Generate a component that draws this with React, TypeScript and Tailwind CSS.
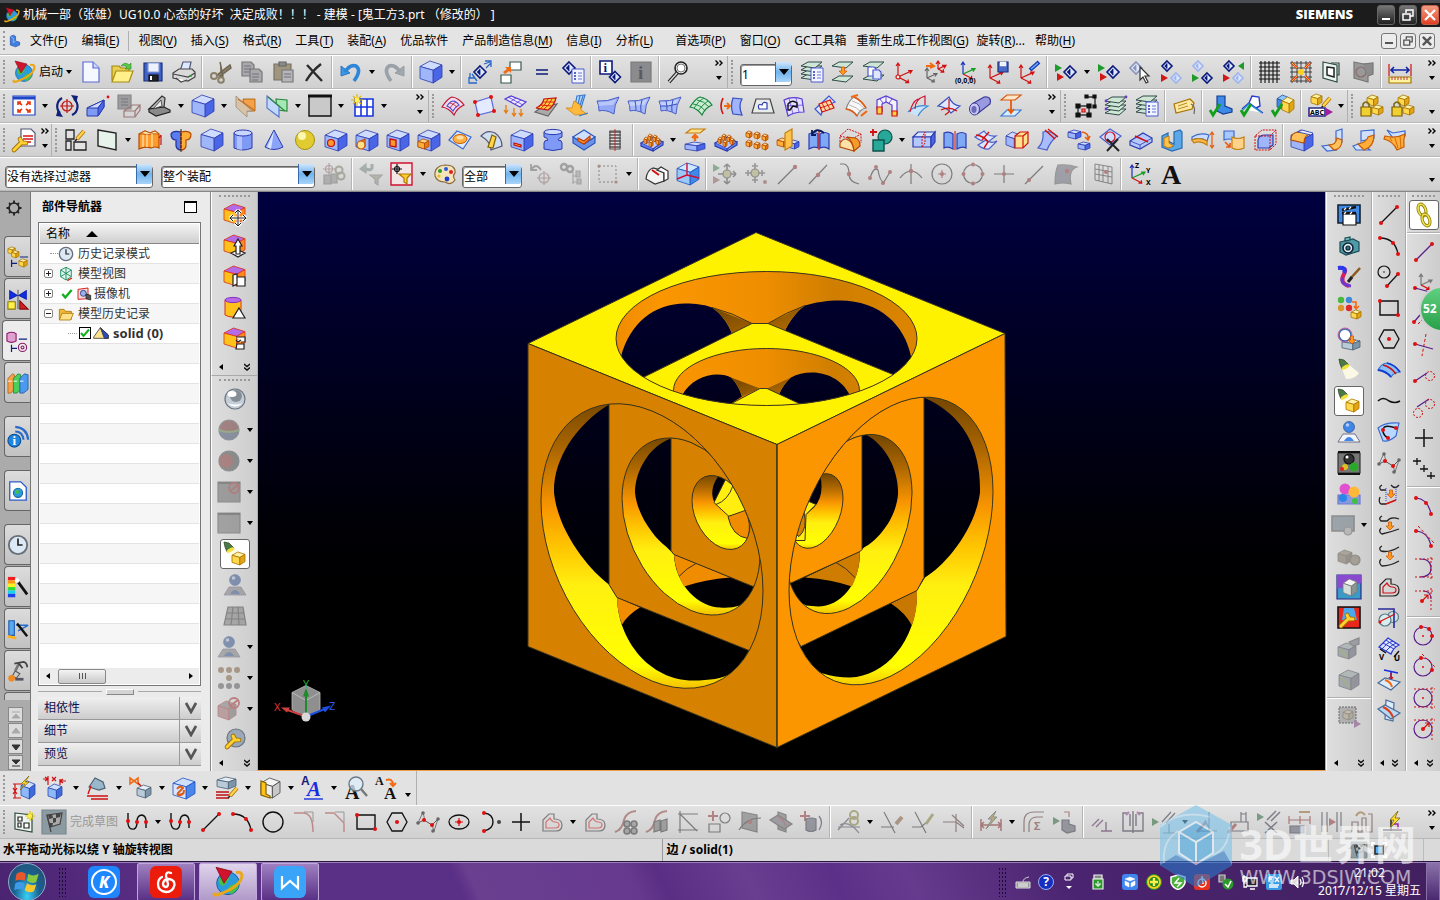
import type { ReactNode } from "react";

type Palette = [string, string, string, string];

const BLUE: Palette = ["#cfdcff", "#9fb6fa", "#4a66e6", "#2a3bb0"];
const GOLD: Palette = ["#fff3a8", "#ffd84e", "#e2a516", "#a87400"];
const ORANGE: Palette = ["#ffd592", "#ffae3c", "#e57a12", "#b34b00"];
const STEEL: Palette = ["#e6eef5", "#b9cad8", "#7d95a8", "#4c6172"];
const PURPLE: Palette = ["#b46be8", "#ffc21a", "#ff8a1c", "#d8301a"];

const p = (d: string, s = "#222", f = "none", w = 1.2) => <path d={d} stroke={s} fill={f} strokeWidth={w} />;
const dot = (x: number, y: number, r = 2, f = "#e01010") => <circle cx={x} cy={y} r={r} fill={f} />;
const ring = (x: number, y: number, r: number, s = "#222", f = "none", w = 1.2) => (
  <circle cx={x} cy={y} r={r} stroke={s} fill={f} strokeWidth={w} />
);

const box = (x: number, y: number, w: number, h: number, c: Palette = BLUE) => (
  <g stroke={c[3]} strokeWidth={0.8} strokeLinejoin="round">
    <path fill={c[0]} d={`M${x} ${y + 0.25 * h}L${x + 0.45 * w} ${y}L${x + w} ${y + 0.18 * h}L${x + 0.6 * w} ${y + 0.42 * h}Z`} />
    <path fill={c[1]} d={`M${x} ${y + 0.25 * h}L${x + 0.6 * w} ${y + 0.42 * h}V${y + h}L${x} ${y + 0.8 * h}Z`} />
    <path fill={c[2]} d={`M${x + 0.6 * w} ${y + 0.42 * h}L${x + w} ${y + 0.18 * h}V${y + 0.74 * h}L${x + 0.6 * w} ${y + h}Z`} />
  </g>
);

const diamond = (x: number, y: number, s: number, c = "#0b1a7a") => (
  <g>
    <path d={`M${x} ${y - s}L${x + s} ${y}L${x} ${y + s}L${x - s} ${y}Z`} fill="#dfe8ff" stroke={c} strokeWidth={1.6} />
    <path d={`M${x} ${y - s * 0.55}L${x - s * 0.55} ${y}L${x} ${y + s * 0.55}Z`} fill={c} />
    <path d={`M${x} ${y - s * 0.55}V${y + s * 0.55}`} stroke={c} strokeWidth={0.8} />
  </g>
);

const sheet = (y: number, f = "#cfe6d4", s = "#2f4a4a") => p(`M1 ${y + 4}L8 ${y}H22L15 ${y + 6}Z`, s, f, 1);

const tri = (x: number, y: number, f: string) => <path d={`M${x} ${y - 4}L${x + 7} ${y}L${x} ${y + 4}Z`} fill={f} />;

const axes = (x: number, y: number, s: number, up = "#d01010", side = "#d01010", low = "#d01010") => (
  <g>
    {p(`M${x} ${y}V${y - s}M${x - 2} ${y - s + 3}L${x} ${y - s}L${x + 2} ${y - s + 3}`, up)}
    {p(`M${x} ${y}L${x + s} ${y - s * 0.45}M${x + s - 4} ${y - s * 0.45}H${x + s}L${x + s - 2} ${y - s * 0.45 + 3}`, side)}
    {p(`M${x} ${y}L${x + s * 0.8} ${y + s * 0.4}M${x + s * 0.8 - 1} ${y + s * 0.4 - 3}V${y + s * 0.4}H${x + s * 0.8 - 4}`, low)}
  </g>
);

const listPage = (x: number, y: number) => (
  <g>
    {p(`M${x} ${y}H${x + 12}V${y + 14}H${x}Z`, "#4a5ad0", "#f2f5ff", 1)}
    {p(`M${x + 2} ${y + 4}H${x + 4}M${x + 2} ${y + 7}H${x + 4}M${x + 2} ${y + 10}H${x + 4}`, "#2a3bb0", "none", 1.5)}
    {p(`M${x + 6} ${y + 4}H${x + 10}M${x + 6} ${y + 7}H${x + 10}M${x + 6} ${y + 10}H${x + 10}`, "#6676dd", "none", 1)}
  </g>
);

const patch = (f: string, s: string, grid?: string) => (
  <g>
    {p("M1 13Q7 4 11 3Q18 4 23 11Q16 14 13 21Q8 14 1 13Z", s, f, 1.2)}
    {grid && p("M4 10Q12 11 16 17M8 6Q15 7 20 13M5 14Q10 6 15 4M9 17Q14 10 19 7", grid, "none", 0.9)}
  </g>
);

const slab = (f: string, s: string) => (
  <g>
    {p("M1 7Q11 8 23 3Q18 11 18 20Q9 15 3 17Q3 11 1 7Z", s, f, 1)}
    <path d="M2 8Q11 9 21 5Q18 9 17 11Q10 11 3 12Z" fill="#fff" opacity={0.35} />
  </g>
);

const loopFig = (s: string, t: string) => (
  <g>
    {p("M3 21V10L9 4H14V9Q22 9 22 15Q22 21 16 21Z", s)}
    {p("M6 18V12L10 8Q12 12 15 12Q19 12 19 15Q19 18 15 18Z", t)}
  </g>
);

const arrowDown = (x: number, y: number) => (
  <path d={`M${x - 1.5} ${y}H${x + 1.5}V${y + 4}H${x + 4}L${x} ${y + 8}L${x - 4} ${y + 4}H${x - 1.5}Z`} fill="#ff9a1c" stroke="#c8500a" strokeWidth={0.7} />
);

const tick = (x: number, y: number) => p(`M${x} ${y}L${x + 3} ${y + 5}L${x + 10} ${y - 6}`, "#12a01c", "none", 2.8);

const pencil = (x: number, y: number) => (
  <g>
    {p(`M${x} ${y}L${x + 7} ${y - 8}`, "#b07000", "none", 4)}
    {p(`M${x} ${y}L${x + 7} ${y - 8}`, "#ffd54a", "none", 2.4)}
    {p(`M${x - 2} ${y + 2}L${x} ${y}`, "#222", "none", 1.6)}
  </g>
);

const wrench = (x: number, y: number) => (
  <g strokeLinecap="round">
    {p(`M${x} ${y + 11}L${x + 8} ${y + 3}M${x + 6} ${y}L${x + 8} ${y + 4}L${x + 12} ${y + 4}`, "#9a6a00", "none", 4.6)}
    {p(`M${x} ${y + 11}L${x + 8} ${y + 3}M${x + 6} ${y}L${x + 8} ${y + 4}L${x + 12} ${y + 4}`, "#ffd030", "none", 3)}
  </g>
);

const glyph = (t: string, x: number, y: number, size: number, f = "#111", family = "Liberation Serif") => (
  <text x={x} y={y} fontSize={size} fontFamily={family} fontWeight={700} fill={f}>{t}</text>
);

const globe = (
  <g>
    <circle cx={12} cy={13} r={8.5} fill="#2b9be0" stroke="#0b4f90" strokeWidth={0.6} />
    <path d="M5 10Q9 6 13 9Q12 13 8 15Q5 14 5 10ZM13 15Q18 12 20 15Q18 20 14 21Q11 18 13 15Z" fill="#48c048" />
    <path d="M2 20Q0 23 6 21Q22 15 22.500 7Q22 4 18 5" fill="none" stroke="#e8a818" strokeWidth={2.2} />
    <path d="M3 1L15 4L9 13Z" fill="#d0142c" stroke="#8c0b1a" strokeWidth={0.6} />
  </g>
);

const lamp = (x: number, y: number) => (
  <g>
    <path d={`M${x + 9} ${y + 5}L${x + 20} ${y + 14}Q${x + 16} ${y + 20} ${x + 7} ${y + 20}L${x + 3} ${y + 10}Z`} fill="#fffde8" opacity={0.9} />
    <path d={`M${x} ${y}L${x + 5} ${y + 1}L${x + 10} ${y + 6}L${x + 3} ${y + 10}L${x + 1} ${y + 5}Z`} fill="#4d7a44" stroke="#22401f" strokeWidth={0.7} />
    <ellipse cx={x + 6.5} cy={y + 8} rx={4.4} ry={1.8} fill="#f4e23c" transform={`rotate(-30 ${x + 6.5} ${y + 8})`} />
  </g>
);

const person = (f: string, base: string) => (
  <g>
    <path d="M6 14H18L23 22H1Z" fill={base} stroke="#557" strokeWidth={0.8} />
    <path d="M7 21Q12 13 17 21Z" fill={f} />
    <circle cx={12} cy={7} r={5.500} fill={f} stroke="#1c3f80" strokeWidth={0.6} />
    <circle cx={10.500} cy={5} r={1.8} fill="#fff" opacity={0.6} />
  </g>
);

const ballBox = (inner: ReactNode) => (
  <g>
    {box(1, 2, 22, 21)}
    {inner}
  </g>
);

const chainLink = (x: number, y: number) => (
  <g fill="none" transform={`rotate(-20 ${x} ${y})`}>
    <ellipse cx={x} cy={y} rx={3.600} ry={6} stroke="#8f8210" strokeWidth={3.200} />
    <ellipse cx={x} cy={y} rx={3.600} ry={6} stroke="#f0e04a" strokeWidth={1.600} />
  </g>
);

const icons: Record<string, ReactNode> = {
  nx: globe,
  part: <>{p("M4 4L9 2L13 4V12L20 14V19L13 22L4 19Z", "#1c44a0", "#3f7fe0", 1)}{p("M4 4L9 7V15L13 12", "#a8ccff")}</>,
  new: <>{p("M4 2H14L20 8V22H4Z", "#5a6ad8", "#f6f8ff")}{p("M14 2V8H20", "#5a6ad8", "#cdd6ff")}</>,
  open: <>{p("M2 6H9L11 8H19V20H2Z", "#a88a10", "#e8cf50")}{p("M6 11H23L19 22H2Z", "#a88a10", "#fff08a")}{p("M11 6Q15 1 19 5L21 3V9H15L17 7Q15 5 11 6Z", "#2a8a20", "#5cc848", 0.6)}</>,
  save: <>{p("M3 3H21V21H3Z", "#1c2f78", "#3f62c8")}{p("M7 3H18V12H7Z", "#8a9ad0", "#eef2ff")}{p("M8 15H17V21H8Z", "#111", "#222")}{p("M10 16V20", "#fff", "none", 2)}</>,
  print: <>{p("M8 11L11 2H19L17 11Z", "#557", "#dceaff")}{p("M1 13L7 9H20L23 12V17L16 21L1 18Z", "#444", "#dadada")}{p("M1 14L16 17L23 13", "#444")}{p("M4 18L9 22L15 20", "#444", "#fff")}{dot(19, 16, 1, "#20b030")}</>,
  cut: <>{p("M8 15L21 5L22 8L10 17M11 2L14 16L11 17", "#6d6452", "#8a806a", 1.4)}{ring(5, 16, 3, "#8a806a", "none", 2)}{ring(12, 20, 2.8, "#8a806a", "none", 2)}</>,
  copy: <>{p("M2 2H11L14 5V16H2Z", "#777", "#a9a9ad")}{p("M10 9H19L22 12V22H10Z", "#777", "#a9a9ad")}{p("M4 6H11M4 9H11M4 12H9M12 14H19M12 17H19M12 20H18", "#70707a", "none", 1)}</>,
  paste: <>{p("M3 4H20V20H3Z", "#7a7260", "#a09680")}{p("M8 2H15V6H8Z", "#666", "#8a8a8a")}{p("M11 10H22V22H11Z", "#777", "#b5b5ba")}{p("M13 14H20M13 17H20", "#70707a", "none", 1)}</>,
  del: <>{p("M5 5L20 21M19 4Q10 11 4 21", "#2b2b2b", "none", 2.4)}</>,
  undo: <>{p("M2 6V16L11 13Z", "#1a66b8", "#3a98e8", 0.8)}{p("M6 12Q11 4 17 6Q23 10 15 21", "#2f86d8", "none", 3.6)}</>,
  redo: <>{p("M22 6V16L13 13Z", "#8d949a", "#a2a9b0", 0.8)}{p("M18 12Q13 4 7 6Q1 10 9 21", "#9aa1a8", "none", 3.6)}</>,
  cube: box(1, 1, 22, 22),
  diaUpdate: <>{diamond(12, 12, 6)}{p("M16 4L22 2M18 8L23 3M17 1H23V7M2 13V18H7M4 14L9 21M1 17V23H9", "#2a66c8", "none", 1.3)}</>,
  boxLink: <>{p("M11 2H22V10H11Z", "#3a5a4a", "#fff")}{p("M2 15H12V23H2Z", "#3a5a4a", "#fff")}<path d="M4 12L8 9L6 7H12V13L10 11L6 14Z" fill="#f26a12" /></>,
  equals: p("M6 10H18M6 14H18", "#0b1a7a", "none", 1.6),
  diaList: <>{diamond(8, 8, 6)}{listPage(11, 9)}</>,
  infoDia: <>{p("M2 1H14V14H2Z", "#0b1a7a", "#fff", 1.6)}{glyph("i", 5.500, 12, 13, "#0b1a7a")}{diamond(17, 17, 5.500)}</>,
  infoGray: <>{p("M2 2H22V22H2Z", "#7a7a7a", "#8b8b8f")}{glyph("i", 9, 19, 19, "#5a5a5e")}</>,
  search: <>{ring(15, 8, 6, "#222", "#f4f4f4", 1.6)}{ring(15, 8, 4, "#555", "#fff", 0.8)}{p("M11 13L3 22", "#222", "none", 3.6)}{p("M11 13L3 22", "#ddd", "none", 1.4)}</>,
  layerList: <>{sheet(14)}{sheet(10)}{sheet(6)}{sheet(2)}{listPage(11, 8)}</>,
  layerMove: <>{sheet(16)}{sheet(2)}{arrowDown(12, 7)}</>,
  layerCopy: <>{sheet(15)}{sheet(2)}{p("M6 7H12L14 9V16H6Z", "#4a5ad0", "#fff")}{p("M11 10H17L19 12V19H11Z", "#4a5ad0", "#dfe6ff")}</>,
  csysRed: <>{axes(5, 17, 14)}{ring(5, 17, 2, "#d01010", "#eee")}</>,
  csysMove: <>{axes(3, 18, 10, "#666", "#666", "#666")}{axes(14, 9, 8)}{p("M2 6H8M6 3L10 6L6 8", "#f26a12", "none", 2)}</>,
  csysZero: <>{axes(8, 14, 12, "#1a30c0", "#18a020", "#d01010")}<text x={0} y={23} fontSize={7} fontWeight={700}>(0,0,0)</text></>,
  csysSave: <>{axes(4, 18, 13)}{p("M12 2H22V12H12Z", "#1c2f78", "#4a6ac8")}{p("M14 2H20V6H14Z", "#fff", "#eef2ff", 0.5)}</>,
  csysPen: <>{axes(4, 18, 13)}{p("M13 10L22 2", "#1a3fb8", "none", 4)}{p("M14 9L21 3", "#6fb0ff", "none", 1.4)}</>,
  playA: <>{tri(1, 8, "#1f9a2c")}{tri(3, 17, "#d01818")}{diamond(16, 12, 6)}</>,
  diaPick: <>{diamond(8, 8, 6, "#8a94b8")}{p("M12 7V20L15 17L18 23L20 22L17 16H21Z", "#333", "#fff")}</>,
  diaRed: <>{diamond(8, 6, 5)}{tri(2, 18, "#d01818")}{diamond(17, 18, 5, "#9fb4ee")}</>,
  diaGreen: <>{diamond(8, 6, 5, "#9fb4ee")}{tri(2, 18, "#1f9a2c")}{diamond(17, 18, 5)}</>,
  diaBoth: <>{diamond(8, 6, 5)}<path d="M23 2V10L17 6Z" fill="#1f9a2c" />{tri(2, 18, "#d01818")}{diamond(17, 18, 5, "#9fb4ee")}</>,
  grid: p("M3 1V23M7 1V23M11 1V23M15 1V23M19 1V23M1 3H22M1 7H22M1 11H22M1 15H22M1 19H22", "#111", "none", 1.1),
  gridSnap: <>{p("M3 1V23M8 1V23M12 1V23M17 1V23M21 1V23M1 3H23M1 8H23M1 12H23M1 17H23M1 21H23", "#333", "none", 0.9)}{dot(12, 12, 3, "#ffd21c")}{p("M3 3L8 8M21 3L16 8M3 21L8 16M21 21L16 16", "#e8380c", "none", 2.4)}{p("M3 3L8 8M21 3L16 8M3 21L8 16M21 21L16 16", "#ffae20", "none", 1)}</>,
  planeBox: <>{p("M3 2L17 5V22L3 18Z", "#2f4a3f", "#e9f5ee")}{p("M7 7L14 8V17L7 15Z", "#222", "#fff", 1.5)}{p("M11 3H19V15H17", "#2f4a3f")}</>,
  planeGray: <>{p("M3 2L17 5V22L3 18Z", "#777", "#999")}{ring(10, 12, 5, "#8a6a6a")}{p("M12 4L22 3V14L17 16", "#777", "#8c8c8c")}</>,
  measure: <>{p("M1 4V16M23 4V16", "#d01010")}{p("M3 10H21M6 7L3 10L6 13M18 7L21 10L18 13", "#1026a8", "none", 1.6)}{p("M1 17H23V23H1Z", "#a87400", "#fff3a0")}{p("M4 17V20M7 17V20M10 17V20M13 17V20M16 17V20M19 17V20", "#a01040", "none", 0.8)}</>,

  fit: <>{p("M1 2H23V21H1Z", "#1f46c8", "#fff")}{p("M1 4H23", "#1f46c8", "none", 3)}{p("M6 8L10 11M18 8L14 11M6 18L10 15M18 18L14 15M6 11V8H9M15 8H18V11M6 15V18H9M15 18H18V15", "#e8380c", "none", 1.6)}</>,
  rotate: <>{p("M7 4A9.5 9.5 0 0 0 5 19M17 21A9.5 9.5 0 0 0 19 5", "#10207a", "none", 2.2)}<path d="M16 1L23 2L21 9ZM8 23L1 22L3 15Z" fill="#10207a" />{ring(12, 12, 5, "#c01010")}{p("M12 5V19M5 12H19", "#c01010")}</>,
  perspective: <>{p("M1 14L18 6V13L12 22L1 22Z", "#2a3bb0", "#7f9af2", 1)}{p("M1 14L18 6L12 14Z", "#2a3bb0", "#cfdcff", 1)}{p("M12 14L18 6V13L12 22Z", "#2a3bb0", "#4a66e6", 1)}{dot(22, 3, 1.4)}</>,
  drawGray: <>{p("M1 1H14V15H1Z", "#888", "#9c9ca0")}{p("M4 5H11M4 8H11M4 11H11", "#777")}{p("M7 17H18V23H7ZM7 17L15 11H23L18 17M23 11V16L18 23", "#a07878")}</>,
  section: <>{p("M1 15L14 2L17 4L16 13Z", "#333", "#b9b9b9")}{p("M1 15L16 13L22 16V18L8 22L1 18Z", "#222", "#8a8a8a")}{p("M5 15L13 6L14 12Z", "#333", "#eee", 0.8)}</>,
  clipOrange: <>{p("M9 5H21V17L11 17Z", "#a85a00", "#f5a04a", 0.8)}{p("M2 2L18 17H13V23L2 13Z", "#9a8c7a", "#d9c3a8", 0.8)}{p("M4 5L20 16", "#c07020")}</>,
  clipGreen: <>{p("M11 5L22 6V17L12 16Z", "#2a8a3c", "#a5e8b4")}{p("M2 2L14 12V23L2 14Z", "#5a7ad0", "#c3d8ff")}{p("M3 3L20 17", "#2a8a3c")}</>,
  frame: <>{p("M1 2H23V22H1Z", "#111", "#c9c9c9", 1.4)}{p("M0 2H24", "#111", "none", 3)}</>,
  gridStar: <>{p("M4 5H22V22H4ZM10 5V22M16 5V22M4 13H22", "#1a36e0", "#fff", 1.6)}{p("M6 0V12M0 6H12M2 2L10 10M10 2L2 10", "#e0b800", "none", 1.2)}{dot(6, 6, 2.4, "#fff04a")}</>,
  surfRed: <>{patch("#f0dcec", "#c01030")}{p("M6 12Q9 7 13 7Q16 8 18 11Q14 13 12 17Q9 13 6 12Z", "#4a4ad8")}{p("M9 14Q12 9 15 8M9 9Q13 10 16 13", "#c01030", "none", 0.8)}</>,
  planeDots: <>{p("M3 8L19 3L22 17L6 21Z", "#5a6ad8", "#e4eaff")}{dot(3, 8)}{dot(19, 3)}{dot(22, 17)}{dot(6, 21)}</>,
  netDots: <>{p("M2 5L8 2L23 8L17 13Z", "#5a3ad8", "#eef")}{p("M5 3L20 11M7 8L13 4M12 10L18 6", "#5a3ad8", "none", 0.8)}{p("M3 11V19M1 16L3 19L5 16M11 14V22M9 19L11 22L13 19M18 15V22M16 19L18 22L20 19", "#e87a10", "none", 1.3)}</>,
  netRed: <>{p("M1 18L8 13L23 10L14 22Z", "#666", "#aaa")}{p("M2 14Q8 12 10 5L22 4Q20 12 14 16Z", "#c01010", "#ffd040")}{p("M6 15Q11 12 14 5M10 15Q15 12 18 5M6 11L18 12M9 8L20 8", "#e02010", "none", 1)}</>,
  pour: <>{p("M12 2L20 1L16 14L10 12Z", "#3a7ad0", "#b9dcff")}{p("M1 14H7L9 7L15 10L16 16L22 20L10 21Z", "#d08810", "#ffb93c", 0.8)}{p("M14 22L23 19M15 2L13 10M18 2L15 11", "#3a7ad0", "none", 1.2)}</>,
  slab: slab("#93a9f5", "#4a5fc8"),
  slabLines: <>{slab("#a5b8f8", "#4a5fc8")}{p("M8 7Q9 11 9 16M15 6Q13 12 14 18", "#3a4fc0", "none", 1)}</>,
  slabGrid: <>{slab("#a5b8f8", "#4a5fc8")}{p("M8 7Q9 11 9 16M15 6Q13 12 14 18M2 12Q10 13 19 10", "#3a4fc0", "none", 1)}</>,
  netGreen: patch("#c8ecd2", "#16823a", "#16823a"),
  bracketIn: <>{p("M3 4Q-1 12 3 20", "#d01010", "none", 1.6)}{p("M4 12H9M7 9L10 12L7 15", "#f26a12", "none", 1.8)}{p("M13 4L22 5Q18 12 22 21L13 20Q10 12 13 4Z", "#3a4fc0", "#9fb4fa")}</>,
  trap: <>{p("M5 5H19L23 19H1Z", "#444", "#e8ece8")}{p("M8 15Q6 9 11 11Q12 7 16 9V15Z", "#2a3bb0", "#fff")}</>,
  loopGrid: <>{p("M2 6Q10 2 20 5L22 18Q12 18 6 22Z", "#5a3ad8", "#e4e0ff")}{p("M7 4L11 20M14 4L17 18M3 12L21 11", "#5a3ad8", "none", 0.7)}{p("M6 16V10Q10 5 15 9V13L11 12L8 16Z", "#111", "none", 1.4)}</>,
  gridPatch: <>{p("M2 15L8 21Q10 12 22 8L16 2Q10 8 2 15Z", "#3a5ad8", "#dfe8ff")}{p("M6 10L17 6L21 14L9 18Z", "#d01010", "#ffd9a0")}{p("M9 9L13 17M13 8L17 15M7 14L19 10", "#d01010", "none", 0.9)}</>,
  gridOrange: <>{p("M2 15Q5 6 10 3Q17 6 22 14Q16 15 13 22Q9 16 2 15Z", "#888", "#f7f7f7")}{p("M2 15Q9 16 13 22M10 3Q17 6 22 14", "#e05a10", "none", 1.6)}{p("M5 11Q13 13 17 18M8 7Q16 9 20 14", "#aaa", "none", 0.8)}{p("M7 3L14 1M17 22L23 17", "#f26a12", "none", 2.2)}</>,
  gridU: <>{p("M2 15V6L11 2L22 7V20L17 18V11L11 8L7 10V17Z", "#5a3ad8", "#f2f2f8")}{p("M5 5L8 9M11 2V8M17 5L14 9", "#5a3ad8", "none", 0.9)}{p("M2 13H7V20H2Z", "#d01010", "#ffd040")}{p("M17 17H22V22H17Z", "#d01010", "#ffd040")}</>,
  trimRed: <>{p("M2 18Q10 10 22 12Q15 16 12 22", "#3a8ad0", "#c9e4ff")}{p("M9 15Q9 5 19 2V11M4 18Q6 8 12 5", "#d01030")}</>,
  trimBlue: <>{p("M1 12L12 3Q15 11 23 12L14 19Q9 13 1 12Z", "#3a4fc0", "#dfe8ff")}{p("M4 16Q12 12 20 17M12 5V18M12 18L8 21", "#d01010")}</>,
  tube: <>{p("M4 10L16 3Q24 2 22 10L9 20", "#3a3a9a", "#9a9ae0")}<ellipse cx={6.500} cy={15} rx={5} ry={6} fill="#c8c8f4" stroke="#3a3a9a" /><ellipse cx={6} cy={15.500} rx={2.6} ry={3.4} fill="#6a6ab8" /></>,
  project: <>{p("M2 6L8 1H22L16 6Z", "#d05a10", "#ffe4c8")}{p("M2 22L8 16H22L16 22Z", "#3a7ad0", "#d8ebff")}{p("M12 6V18M9 15L12 19L15 15", "#e8590c", "none", 1.8)}</>,
  nodes: <>{p("M5 12H16V21H5ZM13 3H22V12", "#333", "none", 1.4)}{p("M3 10H7V14H3ZM14 10H18V14H14ZM3 19H7V23H3ZM14 19H18V23H14ZM12 1H15V4H12ZM20 1H23V4H20ZM20 11H23V14H20Z", "#111", "#111")}{p("M9 15H12V18H9Z", "#d01010", "#ff8080")}</>,
  layers: <>{sheet(15)}{sheet(11)}{sheet(7)}{sheet(3)}{dot(2, 7, 1.4, "#6a3ac0")}{dot(22, 3, 1.4, "#6a3ac0")}{dot(2, 15, 1.4, "#6a3ac0")}</>,
  tag: <>{p("M2 10L18 5L22 9L20 15L4 19Z", "#a87400", "#ffe9a0")}{p("M6 12L15 9M6 15L16 12", "#a87400", "none", 0.8)}{p("M19 10Q24 12 22 20", "#666")}</>,
  checkPart: <>{p("M8 2H16V12L23 15V18L14 20L8 17Z", "#123f90", "#3f8ae8")}{tick(1, 16)}</>,
  checkPen: <>{p("M2 15L9 9L23 19M9 9L12 2L19 3L20 12L16 14", "#2a3bd0", "#fff", 1.4)}{p("M3 16L9 10L22 19", "#2a9ad0", "none", 1.4)}{tick(1, 16)}</>,
  checkBox: <>{box(6, 1, 12, 15, ["#8ac8ff", "#3f8ae8", "#2a66c8", "#1c4f9a"])}{box(11, 3, 12, 16, GOLD)}{tick(1, 16)}</>,
  abc: <>{box(3, 0, 11, 11, GOLD)}{pencil(15, 12)}{p("M1 14H17V22H1Z", "#2a2a8a", "#fff", 1.6)}<text x={2} y={21} fontSize={7} fontWeight={700}>ABC</text>{tri(18, 18, "#a020a0")}</>,
  lockA: <>{box(7, 1, 11, 11, GOLD)}{box(12, 11, 11, 10, GOLD)}{p("M3 13V10Q6 6 9 10V13", "#7a6a10", "none", 1.6)}{p("M1 13H11V22H1Z", "#7a5a00", "#f0d030")}</>,

  doc: <>{p("M9 1H19L23 5V18H9Z", "#557", "#fff")}{p("M11 8H21M11 11H21M11 14H19", "#e05050", "none", 1.8)}{wrench(2, 11)}</>,
  sketch: <>{p("M2 2H10V11H2ZM2 13H7V22H2ZM10 14H22V22H10Z", "#222", "#e2e2e2", 1.3)}{pencil(13, 11)}</>,
  plane: p("M3 2L21 5V22L3 18Z", "#222", "#e5f3ea", 1.4),
  extrude: <>{p("M1 6L7 3L12 5L17 3L21 6V20Q17 18 13 20Q7 18 1 21Z", "#b34b00", "#ff9a2c")}{p("M1 6Q6 5 9 7Q14 5 21 6L17 3L12 5L7 3Z", "#b34b00", "#ffe0a8", 0.8)}{p("M5 7V19M9 7V19M14 6V19", "#ffd592", "none", 1.600)}{p("M23 17V7M21 10L23 7", "#d01010")}</>,
  revolve: <>{p("M12 4Q4 2 2 6Q2 12 7 12V18Q8 22 12 22Z", "#22309a", "#5a7cf0")}{p("M12 4Q20 2 22 6Q22 12 17 12V18Q16 22 12 22Z", "#b34b00", "#ffae3c")}<path d="M12 1V24" stroke="#222" strokeDasharray="3 1" /></>,
  cylinder: <>{p("M3 5V20Q12 24 21 20V5", "#2a3bb0", "#7f9af5", 1)}<path d="M6 6V21L11 22V7Z" fill="#c5d2ff" opacity={0.7} /><ellipse cx={12} cy={5} rx={9} ry={3} fill="#c9d6ff" stroke="#2a3bb0" /></>,
  cone: <>{p("M12 2L21 19Q12 24 3 19Z", "#2a3bb0", "#8ba3f8", 1)}<path d="M12 3L5 19L9 21Z" fill="#dbe3ff" /></>,
  sphere: <>{ring(12, 12, 9.500, "#a89010", "#e0cc30", 1)}<circle cx={9} cy={8} r={4} fill="#fbf6b0" /></>,
  hole: ballBox(ring(7, 15, 3.500, "#c01010", "#ff9a2c")),
  boss: ballBox(<>{p("M4 14L10 11V18L8 20Z", "#c05000", "#ff9a2c")}{ring(6, 17, 4, "#c05000", "#ffe08a")}</>),
  pocket: ballBox(p("M4 11L10 12V19L4 18Z", "#c01010", "#ff9a2c", 1.4)),
  pad: ballBox(box(1, 11, 11, 10, ORANGE)),
  emboss: <>{p("M1 12L9 3L23 9L15 21Z", "#3a6ad0", "#dceaff")}<ellipse cx={12} cy={11} rx={7} ry={4.500} fill="#ffb040" stroke="#c85a00" /><ellipse cx={12} cy={9.500} rx={3.500} ry={2} fill="#ffe0a8" /></>,
  fan: <>{p("M2 8Q8 1 16 5Q23 10 23 18L12 22Q12 14 2 8Z", "#557", "#cfdff0")}{p("M9 19L13 7L17 9L14 20Z", "#806000", "#ffd54a")}</>,
  slot: ballBox(p("M4 15L11 17V19L4 17Z", "#c01010", "#ff9a2c")),
  groove: <>{p("M3 4V9Q7 10 7 12Q3 12 3 15V21Q12 24 21 21V15Q21 12 17 12Q17 10 21 9V4", "#2a3bb0", "#7f9af5", 1)}<ellipse cx={12} cy={4} rx={9} ry={2.6} fill="#cfdcff" stroke="#2a3bb0" /></>,
  dart: <>{p("M1 9L12 2L23 9L12 16Z", "#2a5ac0", "#cfe0ff")}{p("M1 9V15L12 22L23 15V9L12 16Z", "#2a5ac0", "#6a90e8")}{p("M6 10L12 13L18 8V11L12 16L6 13Z", "#c04000", "#ff8a2c")}</>,
  thread: <>{p("M7 3H17V21H7Z", "#555", "#ddd")}{p("M6 4H18M6 7H18M6 10H18M6 13H18M6 16H18M6 19H18", "#555", "none", 1.4)}{p("M12 1V23", "#d01010", "none", 0.8)}</>,
  pattern: <>{p("M1 15L11 9L23 14L13 21Z", "#2a3bb0", "#b9c9fb")}{p("M1 15V18L13 23V21M13 23L23 17V14", "#2a3bb0", "#5a7cf0")}{box(4, 9, 4, 7, ORANGE)}{box(8, 6, 4, 7, ORANGE)}{box(9, 12, 4, 7, ORANGE)}{box(13, 7, 4, 7, ORANGE)}{box(16, 10, 4, 7, ORANGE)}</>,
  patternFace: <>{p("M3 5L8 1H22L17 5Z", "#c08010", "#ffe08a")}{p("M12 13V8M9 10L12 7L15 10", "#f26a12", "none", 2.4)}{box(2, 14, 20, 9)}</>,
  patternMany: <>{box(1, 3, 6, 7, ORANGE)}{box(9, 4, 6, 7, ORANGE)}{box(17, 6, 6, 7, ORANGE)}{box(1, 12, 6, 7, ORANGE)}{box(9, 14, 6, 7, ORANGE)}{box(17, 15, 6, 7, ORANGE)}</>,
  mirror: <>{box(1, 10, 11, 9, ORANGE)}{box(12, 12, 11, 9)}{p("M9 5L16 1V18L9 22Z", "#c08010", "#ffc24a")}</>,
  mirrorBlue: <>{p("M2 6Q7 3 11 6V20Q7 18 2 21ZM13 6Q18 3 22 6V21Q18 18 13 20Z", "#2a3bb0", "#7fa8f5")}{p("M12 3V22", "#d01010")}{p("M5 6Q10 -1 17 5M5 2V7H9", "#0b1a5a", "none", 1.8)}</>,
  bodyDash: <>{<path d="M2 14V8L10 1L23 6V15M2 8L14 11V15M14 11L23 6" fill="none" stroke="#d01010" strokeDasharray="2 1" />}{p("M2 19V15Q6 9 10 12Q15 14 16 23Z", "#b34b00", "#ffe0a8")}{p("M16 23L22 18Q22 11 17 10L9 9Q15 13 16 23Z", "#b34b00", "#f59a2c")}</>,
  combine: <>{ring(16, 9, 7, "#0f4f4a", "#28a898")}{p("M4 12H15V23H4Z", "#0f4f4a", "#28a898", 1.4)}{p("M4 1V8M1 4H8", "#d01010", "none", 1.8)}</>,
  split: <>{p("M1 9L6 4H23L19 9Z", "#2a3bb0", "#dbe3ff")}{p("M1 9H19V19H1Z", "#2a3bb0", "#b5c8fc")}{p("M19 9L23 4V14L19 19Z", "#2a3bb0", "#4a66e6")}{<path d="M10 19V9L13 4M10 19L13 15V4" fill="none" stroke="#d01010" strokeDasharray="2 1" />}</>,
  trimBody: <>{p("M1 5Q6 3 10 6V21Q5 18 1 20ZM14 6Q19 3 23 6V20Q19 18 14 21Z", "#2a3bb0", "#7fa8f5")}{p("M12 3V22", "#d01010", "none", 1)}</>,
  sheetRed: <>{p("M1 9L10 3Q14 9 22 8L14 14Q8 14 1 9Z", "#4a5fc8", "#dfe6ff")}{p("M4 17L12 12Q16 16 23 13L15 21Q10 22 4 17Z", "#4a5fc8", "#dfe6ff")}{p("M2 7Q10 8 14 14L10 20M15 4L8 12", "#d01010", "none", 1.4)}</>,
  boxDash: <>{box(1, 4, 14, 16, ["#cfdcff", "#9fb6fa", "#ffae3c", "#2a3bb0"])}{p("M10 8L15 4H23V15L18 20H10Z", "#d01010", "#ffe28a")}{p("M10 8H18V20M18 8L23 4", "#d01010")}</>,
  skin: <>{p("M7 4Q14 2 21 8Q14 14 11 22L2 20Q8 14 7 4Z", "#4a5fc8", "#a8bdfa")}{p("M9 2L19 11M12 1L22 9", "#d01010", "none", 1.4)}</>,
  boxMove: <>{box(1, 2, 13, 9)}{box(11, 14, 12, 8)}{p("M15 4Q22 5 21 11M18 9L21 12L23 8", "#e8590c", "none", 1.6)}</>,
  delFace: <>{p("M2 9L12 1L23 8L12 17Z", "#4a5fc8", "#cfdcff")}{ring(12, 9, 5, "#d01010")}{p("M9 11L21 23M20 11L9 23", "#222", "none", 2)}</>,
  slabCut: <>{p("M1 13L14 5L23 10V14L11 21L1 17Z", "#2a3bb0", "#b5c8fc")}{p("M1 13L11 17L23 10M11 17V21", "#2a3bb0", "none", 0.8)}{p("M6 8L19 14", "#d01010", "none", 1.600)}</>,
  bend: <>{p("M2 8L8 5V13L14 16V4L20 2L22 4V20L12 23L2 19Z", "#2a6ab0", "#5aa8e8")}{p("M4 10L9 8V15L14 18L8 20L4 18Z", "#b36a00", "#ffc24a", 0.8)}</>,
  thick: <>{p("M1 9Q9 4 18 7L16 13Q9 9 1 12Z", "#3a6ad0", "#c8dcff")}{p("M1 12Q9 9 16 13V17Q9 12 3 15Z", "#c08010", "#ffb84a")}{p("M21 4V20M19 7L21 4L23 7M19 17L21 20L23 17", "#e8590c")}</>,
  wrapFace: <>{p("M2 3H12V12Q7 10 2 12Z", "#3a6ad0", "#a8c8ff")}{p("M10 9Q16 12 22 9V20Q16 23 10 20Z", "#c08010", "#ffd28a")}{p("M3 14L8 19M8 15V19H4", "#e8590c", "none", 1.6)}</>,
  offset: <>{p("M5 20V12Q6 7 12 7H20V17L16 20Z", "#2a3bb0", "#9fb6fa")}{<path d="M2 22V8L9 2H23V16L17 22Z M2 8H17V22M17 8L23 2" fill="none" stroke="#d01010" strokeDasharray="2 1" />}</>,
  edgeBlend: <>{box(1, 2, 22, 21)}{p("M1 11Q1 5 8 4L22 6Q14 6 14 15L1 12Z", "#b34b00", "#ffc25a")}{p("M8 4L12 2L23 5L21 7Z", "#2a3bb0", "#e8eeff", 0.8)}</>,
  faceBlend: <>{p("M15 3L21 1V14L15 16ZM1 18L10 17L15 22L6 23Z", "#3a6ad0", "#cfe0ff")}{p("M8 17Q15 17 16 10L21 12Q21 21 13 22Z", "#c85a00", "#ffc25a")}</>,
  softBlend: <>{p("M9 3L22 2V10L9 13ZM1 18L9 15L18 22L4 22Z", "#3a6ad0", "#cfe0ff")}{p("M6 16Q15 14 16 9L22 7Q22 19 12 22Z", "#c85a00", "#ffae3c")}</>,
  bridge: <>{p("M4 2L10 5L22 3V8L10 10Z", "#3a6ad0", "#cfe0ff")}{p("M2 8Q12 11 22 6Q20 12 21 19L14 22Q10 13 1 11Z", "#c85a00", "#ffae3c")}{p("M7 10L9 13M12 10L15 20M17 8L18 20", "#c85a00", "none", 0.8)}</>,

  selLink: <>{p("M2 13H9V22H2ZM9 12H15V21H9Z", "#666", "#888")}{ring(7, 7, 3.500, "#8a6a6a")}{p("M7 1V13M1 7H13", "#8a6a6a")}{ring(17, 8, 3.500, "#777560", "none", 2)}{ring(19, 14, 3.500, "#777560", "none", 2)}</>,
  backFilter: <>{p("M13 2V6Q12 9 7 7", "#6f7f7f", "none", 3)}{p("M7 2L1 7L7 11Z", "#6f7f7f", "#6f7f7f")}{p("M11 13H23L19 17V23L16 21V17Z", "#777", "#93907a")}</>,
  filter: <>{p("M1 1H22V23H1Z", "#d01030", "#f3e6e6", 1.4)}{p("M7 2V12M2 7H12", "#111")}{ring(7, 7, 2.500, "#111")}{p("M9 12H21L17 16V22L14 20V16Z", "#b07800", "#ffd030")}</>,
  palette: <>{p("M2 14Q1 4 12 3Q23 3 22 11Q19 14 22 18Q18 24 12 20Q4 20 2 14Z", "#8a6a3a", "#f5e2b8")}{dot(7, 9, 2, "#2a9a2a")}{dot(13, 7, 2, "#2a5ae0")}{dot(18, 10, 2, "#e02020")}{dot(14, 17, 2.4, "#1a3ad0")}{dot(6, 14, 1.600, "#e0c020")}</>,
  spin: <>{p("M3 2V8H9M3 8Q8 0 13 8", "#666", "none", 1.8)}{ring(16, 16, 5, "#8a6a6a")}{p("M16 9V23M9 16H23", "#8a6a6a")}</>,
  chainTree: <>{ring(5, 5, 3, "#666", "none", 2.4)}{ring(11, 7, 3, "#666", "none", 2.4)}{p("M14 10V22M14 14H18M14 20H18M17 9H21V15H17ZM18 17H22V22H18Z", "#777", "#999")}</>,
  marquee: <>{<path d="M3 4H20V20H3Z" fill="none" stroke="#333" strokeDasharray="2 2" />}{dot(3, 4, 1.600, "#8a3a3a")}{dot(20, 20, 1.600, "#8a3a3a")}</>,
  sheetCube: <>{p("M1 17Q2 8 8 6L19 9V19L10 22Z", "#333", "#f4f4f4")}{p("M12 8L16 5L23 9V17L19 19V11Z", "#333", "#fff")}{p("M7 8L14 13", "#d01010", "none", 2)}</>,
  wireCube: <>{box(1, 1, 22, 22, ["#d2e8ff", "#9cc8f8", "#3f8ae8", "#1c4fc0"])}{p("M11 1V13L1 17M11 13L23 16", "#d01030", "none", 1.4)}</>,
  snapAll: <>{tri(0, 6, "#3f7a4f")}{tri(0, 18, "#8a5a5a")}{p("M14 2V22M5 12H23M14 2L11 5M14 2L17 5M14 22L11 19M14 22L17 19M23 12L20 9M23 12L20 15", "#444", "none", 1.6)}{ring(14, 12, 4, "#444", "#aaa86a")}</>,
  snapPt: <>{p("M11 1V21M1 11H21M8 4H14M8 18H14M4 8V14M18 8V14", "#555", "none", 1.6)}{ring(11, 11, 4, "#444", "#aaa86a")}{dot(21, 20, 2, "#8a4a4a")}</>,
  lineDot: <>{p("M3 22L20 5", "#222")}{dot(20, 5, 2.2, "#8a2a2a")}</>,
  lineMid: <>{p("M3 22L21 3", "#222")}{dot(12, 13, 2.2, "#8a2a2a")}</>,
  sCurve: <>{p("M3 2H7Q12 3 12 12Q12 20 22 22", "#222")}{dot(12, 12, 2.2, "#8a2a2a")}</>,
  polyDots: <>{p("M2 16Q6 4 10 8Q12 20 16 20L22 10", "#222")}{dot(2, 16, 2, "#8a2a2a")}{dot(8, 5, 2, "#8a2a2a")}{dot(15, 21, 2, "#8a2a2a")}{dot(22, 10, 2, "#8a2a2a")}</>,
  arcCross: <>{p("M1 16Q12 2 23 16M12 2V22", "#222")}{dot(12, 9, 2.2, "#8a2a2a")}</>,
  circleDot: <>{ring(12, 12, 10, "#222")}{dot(12, 12, 2, "#8a2a2a")}{p("M12 8V16M8 12H16", "#8a2a2a")}</>,
  circleQuad: <>{ring(12, 12, 9.500, "#222")}{dot(12, 2.500, 2, "#8a2a2a")}{dot(12, 21.500, 2, "#8a2a2a")}{dot(2.500, 12, 2, "#8a2a2a")}{dot(21.500, 12, 2, "#8a2a2a")}</>,
  plusDot: <>{p("M12 3V21M2 12H22", "#222")}{dot(12, 12, 2, "#8a2a2a")}</>,
  linePt: <>{p("M2 22L20 4", "#222")}{dot(6, 18, 2, "#8a2a2a")}</>,
  facePt: <>{p("M4 3Q14 2 23 5Q14 8 17 22Q8 20 1 22Q1 10 4 3Z", "#555", "#667")}{dot(13, 9, 2.200, "#8a2a2a")}</>,
  gridPlane: <>{p("M4 2L21 5V22L4 18ZM8 3V19M12 4V20M17 4V21M4 7L21 10M4 12L21 15", "#333", "none", 1)}{dot(15, 10, 2, "#8a2a2a")}</>,
  csysXYZ: <>{axes(4, 16, 13, "#1a30c0", "#18a020", "#d01010")}<text x={7} y={6} fontSize={7} fontWeight={700}>Z</text><text x={18} y={11} fontSize={7} fontWeight={700}>Y</text><text x={18} y={23} fontSize={7} fontWeight={700}>X</text></>,
  bigA: glyph("A", 2, 22, 28),

  orientMove: <>{box(1, 1, 21, 20, PURPLE)}{p("M15 7V23M7 15H23M15 7L12 10M15 7L18 10M15 23L12 20M15 23L18 20M7 15L10 12M7 15L10 18M23 15L20 12M23 15L20 18", "#fff", "none", 3)}{p("M15 7V23M7 15H23M15 7L12 10M15 7L18 10M15 23L12 20M15 23L18 20M7 15L10 12M7 15L10 18M23 15L20 12M23 15L20 18", "#222", "none", 1)}</>,
  orientUp: <>{box(1, 1, 21, 20, PURPLE)}{p("M8 19L15 16L22 19L15 23Z", "#222", "#fff")}{p("M15 5L19 12H17V20H13V12H11Z", "#222", "#fff")}</>,
  orientCopy: <>{box(1, 1, 21, 20, PURPLE)}{p("M10 10L14 9V19L10 21ZM14 12H22V21H14Z", "#222", "#fff")}</>,
  cylTri: <>{p("M2 4V19Q9 23 18 19V4", "#d8301a", "#ffc21a", 1)}<ellipse cx={10} cy={4} rx={8} ry={2.600} fill="#b46be8" stroke="#8a30c0" />{p("M16 12L22 22H10Z", "#222", "#fff")}</>,
  orientSwap: <>{box(1, 1, 21, 20, PURPLE)}{p("M13 10H22V15H18M13 22H21V17H14Z M13 13L15 15L18 13", "#222", "#fff")}</>,
  chrome: <>{ring(12, 12, 10, "#6a7480", "#c4ced8")}<circle cx={13} cy={9} r={6} fill="#858d96" /><ellipse cx={9} cy={7} rx={4.500} ry={3} fill="#fff" /><path d="M4 16Q12 23 20 16Q12 19 4 16Z" fill="#fff" /></>,
  ballRed: <>{ring(12, 12, 10, "#555", "#6a2c2c")}<path d="M2 12Q12 17 22 12A10 10 0 0 1 2 12Z" fill="#3a4a6a" /><path d="M2 12Q12 16 22 12" stroke="#5a7a3a" strokeWidth={2} fill="none" /></>,
  ballCut: <>{ring(12, 12, 10, "#444", "#3f4444")}<circle cx={9} cy={12} r={7} fill="#7a2c2c" /></>,
  screenNo: <>{p("M1 2H23V22H1Z", "#444", "#5f5f5f")}{p("M1 3H23", "#333", "none", 2)}{ring(17, 8, 5, "#8a2a2a", "none", 1.8)}{p("M13 11L21 5", "#8a2a2a", "none", 1.8)}</>,
  screen: <>{p("M1 2H23V22H1Z", "#444", "#6a6a6a")}{p("M1 3H23", "#333", "none", 2)}</>,
  lampCube: <>{lamp(1, 0)}{box(9, 10, 13, 13, GOLD)}</>,
  lamp: lamp(2, 1),
  person: person("#3f86e8", "#f2f5fa"),
  personOff: person("#2a4a86", "#777777"),
  floor: p("M5 3H20L23 21H1ZM10 3L8 21M15 3L16 21M4 9H21M3 15H22", "#333", "#777"),
  ballGrid: <>{dot(4, 4, 3, "#7a5a3a")}{dot(12, 4, 3, "#7a5a3a")}{dot(20, 4, 3, "#7a5a3a")}{dot(12, 12, 3, "#7a5a3a")}{dot(4, 20, 3, "#555")}{dot(12, 20, 3, "#555")}{dot(20, 20, 3, "#555")}</>,
  boxNo: <>{box(1, 4, 18, 19, ["#777", "#966", "#666", "#933"])}{ring(17, 6, 5, "#a02a2a", "none", 1.8)}{p("M13 9L21 3", "#a02a2a", "none", 1.8)}</>,
  chromeKey: <>{ring(13, 10, 9, "#6a7480", "#9aa8b8")}{wrench(4, 8)}</>,

  film: <>{p("M1 2H23V20H1Z", "#123", "#3f8ae8", 1.6)}{p("M6 11H19V22H6Z", "#111", "#fff")}{p("M5 7L19 4M5 10H19", "#111", "none", 2.600)}{p("M7 7L9 5M12 6L14 4M7 11L9 9M13 11L15 9", "#fff")}</>,
  camera: <>{p("M3 8L16 5L22 8V17L9 21L3 18Z", "#1c4a52", "#4f9aa8")}{ring(11, 14, 5, "#123", "#d8ecf0", 1.6)}{ring(11, 14, 2, "#123", "#3a6a8a")}{p("M8 4L13 3V6L8 7Z", "#1c4a52", "#6ab8c4")}</>,
  brush: <>{p("M1 3Q11 2 7 9Q2 18 12 21", "#d02060", "none", 4)}{p("M1 3Q10 2 7 8", "#2a3af0", "none", 4)}{p("M5 13Q4 20 14 21", "#6a3ad0", "none", 3)}{p("M13 14L23 3", "#8a5a20", "none", 2.600)}{p("M11 17L15 12", "#222", "none", 3)}</>,
  balls: <>{dot(4, 4, 3.200, "#4ab83c")}{dot(12, 4, 3.200, "#3f8ad8")}{dot(4, 12, 3.200, "#d8962c")}{dot(12, 12, 3.200, "#e02828")}{p("M15 6H19V12M17 10L19 13L22 10", "#f26a12", "none", 1.600)}{box(14, 14, 10, 9, GOLD)}</>,
  gearBox: <>{box(5, 12, 18, 11, STEEL)}{ring(8, 8, 6, "#3a6ab8", "#fff", 1.600)}{ring(8, 8, 7, "#c04a8a", "none", 0.8)}{arrowDown(15, 9)}</>,
  sceneBall: <>{p("M1 2H23V22H1Z", "#333", "#777")}{p("M1 1H23M1 23H23", "#111", "none", 2)}{ring(12, 8, 5, "#111", "#333")}{dot(10, 6, 1.500, "#fff")}{dot(17, 16, 4.500, "#2aa82a")}{dot(8, 16, 3, "#e0c020")}{dot(5, 18, 2, "#e02020")}</>,
  sceneColor: <>{p("M1 13H23V22H1Z", "#6a7ad0", "#8a98e0")}{dot(8, 7, 5.500, "#e050d0")}{dot(17, 10, 5.500, "#ffb838")}{dot(6, 16, 4, "#2a86e8")}{dot(18, 19, 3, "#40c040")}</>,
  monitor: <>{p("M1 3H23V18H1Z", "#444", "#5f6f7c", 1.600)}{ring(17, 18, 4, "#555", "#999")}</>,
  solids: <>{box(1, 6, 14, 14, ["#7d7361", "#6d6453", "#5a5244", "#4c453a"])}{ring(18, 16, 5, "#4c453a", "#756c5b")}</>,
  scene: <>{p("M0 0H24V24H0Z", "#2a2a8a", "#3a9ac8")}<path d="M0 0H24V8L0 14Z" fill="#8a4ad0" />{box(6, 4, 14, 17, ["#f4f4f4", "#d4dcd8", "#8a9490", "#777"])}</>,
  flagKey: <>{p("M1 1H23V22H1Z", "#111", "#e8281c", 1.600)}<path d="M7 2H17L20 14H5Z" fill="#4aa8f0" />{wrench(4, 9)}</>,
  boxShot: <>{box(1, 6, 18, 16, ["#8a9a9a", "#6a7a7a", "#556", "#334"])}{p("M12 5L22 1V7L16 9Z", "#444", "#667")}{p("M3 12L10 20", "#7a8a2a")}</>,
  boxView: <>{box(2, 2, 20, 20, ["#8a9a9a", "#6a7a7a", "#556", "#334"])}{p("M4 9L13 19", "#7a8a2a")}</>,
  boxMarquee: <>{<path d="M2 2H19V18H2Z" fill="#8a8a8a" stroke="#000" strokeDasharray="2 1" />}{box(6, 5, 10, 10, ["#b5a888", "#a09478", "#8a8068", "#4a4230"])}{tri(17, 19, "#7a3a7a")}</>,

  line: <>{p("M4 20L20 4", "#111", "none", 1.300)}{dot(4, 20)}{dot(20, 4)}</>,
  arc: <>{p("M3 4Q18 4 21 20", "#111", "none", 1.300)}{dot(3, 4)}{dot(16, 9)}{dot(21, 20)}</>,
  circleLine: <>{ring(7, 7, 6, "#111")}{dot(7, 7, 0.8, "#111")}{p("M10 21L21 9", "#111")}{dot(10, 21)}{dot(21, 9)}</>,
  rect: <>{p("M3 5H21V19H3Z", "#111", "none", 1.400)}{dot(3, 5)}{dot(21, 19)}</>,
  hex: <>{p("M7 3H17L22 12L17 21H7L2 12Z", "#111", "none", 1.300)}{dot(12, 12)}</>,
  stripSurf: <>{p("M1 12Q5 5 10 5Q18 7 23 14Q17 14 14 19Q9 13 1 12Z", "#3a7ad0", "#8ac0f8")}{p("M1 12Q9 13 14 19M10 5Q18 7 23 14", "#123fd0", "none", 1.800)}{p("M6 7Q14 9 19 16", "#d01010", "none", 1.600)}</>,
  wave: p("M1 12Q6 7 12 12Q18 15 23 12", "#111", "none", 1.600),
  curveSurf: <>{p("M1 8Q8 2 22 3L19 16Q12 22 6 21Z", "#3a6ad0", "#b9d8ff")}{p("M19 8Q5 3 6 12Q7 16 11 18", "#111", "none", 1.400)}{dot(19, 8)}{dot(6, 10)}{dot(11, 18)}</>,
  spline: <>{p("M2 13L7 2L9 11M16 15L18 21L22 9L16 15", "#777", "none", 1)}{p("M2 13L8 10L16 15L22 9", "#555", "none", 1)}{dot(8, 10, 2)}{dot(16, 15, 2)}{dot(2, 13, 1.800, "#666")}{dot(7, 3, 1.800, "#666")}{dot(22, 9, 1.800, "#666")}{dot(17, 21, 1.800, "#666")}</>,
  proj1: <>{p("M5 3Q1 5 4 8H9M3 15Q1 20 4 22H9M14 3Q18 8 22 3", "#222", "none", 1.300)}{p("M9 22L19 18", "#d01010", "none", 1.600)}{<path d="M9 6V20M19 5V18" stroke="#2a3ae8" strokeDasharray="1 1" />}{arrowDown(14, 8)}</>,
  proj2: <>{p("M5 3Q1 5 4 8H10Q14 3 22 6M4 15Q1 19 5 21Q14 19 22 16", "#222", "none", 1.300)}{arrowDown(13, 9)}</>,
  proj3: <>{p("M5 2Q1 4 4 7Q12 9 22 3M4 15Q1 19 5 22Q13 22 22 17", "#222", "none", 1.300)}{arrowDown(13, 8)}</>,
  loop: loopFig("#222", "#d01010"),
  pipeCross: <>{ring(16, 11, 5.500, "#5a7a8a", "#c8e4e4")}{ring(8, 14, 6, "#5a7a8a", "#d8eeee")}{p("M1 3H17V22", "#2a2a9a", "none", 1.600)}{p("M2 16L18 8", "#d01010")}{dot(3, 16, 1.600)}</>,
  uvNet: <>{p("M2 10L11 1L22 8Q16 11 14 17Z", "#2a3bd0", "#dce4ff")}{p("M5 12Q10 5 16 4M9 14Q14 8 19 6M6 6L17 12M9 3L19 10", "#2a3bd0", "none", 1)}{p("M9 16L3 12M22 14L17 20", "#111", "none", 1.400)}<text x={2} y={23} fontSize={8} fontWeight={700}>V</text><text x={17} y={24} fontSize={8} fontWeight={700}>U</text></>,
  dropSurf: <>{p("M7 2L21 5M14 4V11", "#1a30e0", "none", 1.600)}{p("M14 5V11M12 9L14 12L16 9", "#d01010")}{p("M1 15L8 10L23 14L14 22Z", "#4a6a9a", "#dcecfa")}{p("M8 12Q14 14 15 19", "#f26a12", "none", 2)}</>,
  crossSurf: <>{p("M9 1L17 4L16 22L8 20Z", "#4a6a9a", "#dcecfa")}{p("M1 10L8 6L23 14L14 20Z", "#4a6a9a", "#b9d8f4")}{p("M6 8Q13 11 16 18", "#e03a10", "none", 2)}</>,
  chain: <>{chainLink(10, 7)}{chainLink(14, 17)}</>,
  cLine: <>{p("M4 20L20 4", "#5a1a8a", "none", 1.300)}{dot(4, 20)}{dot(20, 4)}</>,
  cAxes: <>{axes(9, 14, 11, "#777", "#777", "#d01010")}{dot(3, 17)}{p("M3 17L18 21", "#5a1a8a")}</>,
  cTan: <>{p("M2 20L14 6", "#5a1a8a")}{dot(2, 20)}{<path d="M6 22L18 10" stroke="#d01010" strokeDasharray="3 2" />}</>,
  cPerp: <>{<path d="M14 1L10 23" stroke="#d01010" strokeDasharray="3 2" />}{p("M3 11L21 16", "#5a1a8a")}{dot(3, 11)}</>,
  cLineArc: <>{p("M3 17L15 9", "#5a1a8a")}{dot(3, 17)}<circle cx={18} cy={12} r={4.500} fill="none" stroke="#d01010" strokeDasharray="2 1.500" /></>,
  cTwoArc: <>{p("M5 12L17 4", "#5a1a8a")}<g fill="none" stroke="#d01010" strokeDasharray="2 1.500"><circle cx={6} cy={18} r={4.500} /><circle cx={18} cy={9} r={4.500} /></g></>,
  plus: p("M12 3V21M3 12H21", "#111", "none", 1.500),
  plusMany: p("M5 1V8M1 4H9M12 8V15M8 12H16M19 15V22M15 19H23", "#111", "none", 1.300),
  cArc: <>{p("M4 4Q16 5 19 20", "#5a1a8a")}{dot(4, 4)}{dot(14, 9)}{dot(19, 20)}</>,
  cArcTan: <>{p("M4 6Q16 7 19 21", "#5a1a8a")}{dot(4, 6)}{dot(19, 21)}<path d="M6 1L22 18" stroke="#d01010" strokeDasharray="3 2" /></>,
  cArcBox: <>{p("M8 3Q19 3 19 12Q19 21 8 21", "#5a1a8a")}<path d="M3 3H22M19 1V23M3 21H22" stroke="#d01010" strokeDasharray="2 2" /></>,
  cArcRad: <>{p("M11 4Q19 4 19 12", "#5a1a8a")}<path d="M3 4H22M19 1V23" stroke="#d01010" strokeDasharray="2 2" />{p("M10 14L16 8M12 8H16V12", "#d01010")}{dot(10, 14)}</>,
  cCirc: <>{ring(11, 12, 9, "#5a1a8a")}{dot(11, 12, 1)}{dot(9, 3)}{dot(17, 5)}{dot(20, 12)}</>,
  cCircTan: <>{ring(11, 12, 9, "#5a1a8a")}{dot(11, 12, 1)}{dot(9, 3)}{dot(20, 15)}<path d="M10 -1L23 12" stroke="#d01010" strokeDasharray="3 2" /></>,
  cCircBox: <>{ring(11, 12, 9, "#5a1a8a")}{dot(11, 12, 1)}<path d="M2 3H23M20 1V23M2 21H23" stroke="#d01010" strokeDasharray="2 2" /></>,
  cCircRad: <>{ring(11, 12, 9, "#5a1a8a")}<path d="M2 3H23M20 1V23" stroke="#d01010" strokeDasharray="2 2" />{p("M11 12L17 6M13 6H17V10", "#d01010")}{dot(11, 12)}</>,

  dimCube: <>{box(9, 5, 14, 18, ["#cfe0ff", "#8fb8f8", "#3f6ad8", "#2a4ab0"])}{p("M3 8V22M1 8H9M1 22H9M1 12L5 18M5 12L1 18", "#d01010")}{p("M17 0L9 8H13L8 14L17 6H13Z", "#806000", "#ffe02c", 0.700)}</>,
  dimCube2: <>{box(5, 8, 14, 15, ["#cfe0ff", "#8fb8f8", "#3f6ad8", "#2a4ab0"])}{p("M5 0V9M17 3V9M0 3H4M2 1L5 3L2 5M23 5H18M20 3L17 5L20 7M9 1L13 5M13 1L9 5", "#d01010")}</>,
  angleDim: <>{p("M3 11L9 2L17 6L19 12L13 14Z", "#4c6172", "#9ab8cc")}{p("M2 18L5 10M1 20H22M5 23H22", "#d01010", "none", 1.400)}</>,
  bowPart: <>{p("M1 2L9 8V2L1 8Z", "#f26a12", "none", 1.600)}{p("M9 7L13 11", "#d01010")}{box(8, 9, 14, 13, STEEL)}</>,
  cubeNote: <>{box(1, 2, 22, 21, ["#cfe0ff", "#d8e6ff", "#4a86e8", "#1c4fc0"])}{p("M5 13Q8 9 11 12L6 17Q4 21 12 17M6 19Q12 20 12 14", "#e05a10", "none", 2)}</>,
  slabPen: <>{box(2, 1, 19, 12, STEEL)}{p("M1 16H14M1 19H14M1 22H14", "#c01010", "none", 1.600)}{pencil(15, 20)}</>,
  boxCut: <>{box(3, 2, 19, 20, ["#f4f4f4", "#eee", "#c8c8c8", "#444"])}{p("M3 5L8 7V18L12 20V22L3 19Z", "#806000", "#ffc21a")}</>,
  textStyle: <>{glyph("A", 0, 9, 12, "#1a1a7a", "Liberation Sans")}<text x={6} y={20} fontSize={21} fontFamily="Liberation Serif" fontWeight={700} fontStyle="italic" fill="#1a30e0">A</text>{p("M3 23H22", "#1a30e0", "none", 1.400)}</>,
  textFind: <>{glyph("A", 1, 23, 20)}{ring(12, 8, 7, "#6a7a8a", "#dcecfac0", 1.400)}{p("M17 13L23 20", "#777", "none", 2.400)}</>,
  textMove: <>{glyph("A", 0, 9, 12)}{glyph("A", 9, 23, 17)}{p("M11 4Q18 2 18 9M15 7L18 10L21 7", "#f26a12", "none", 2)}</>,

  sketchNew: <>{p("M3 3L20 5V22L3 19Z", "#2f4a3f", "#eef5ee")}{p("M6 7H10V11H6ZM6 13H9V17H6ZM12 13H17V18H12Z", "#222", "#fff")}{p("M18 1V11M13 6H23M15 3L21 9M21 3L15 9", "#e0c800", "none", 1.200)}{dot(18, 6, 2, "#fff04a")}</>,
  flagGray: <>{p("M0 0H24V24H0Z", "#7a8890", "#8c9aa2")}{p("M5 5L20 3L18 14L8 17Z", "#444", "#aaa")}<path d="M6 5L10 4L11 8L7 9ZM14 4L19 3L18 7L14 8ZM11 8L14 8L14 12L11 13ZM8 13L11 13L10 17L8 17Z" fill="#444" />{p("M5 5L9 22", "#444")}</>,
  profile: <>{p("M3 3V14Q4 20 9 19Q12 18 12 12Q12 5 17 5Q21 6 21 11V18", "#111", "none", 1.400)}{dot(3, 11)}{dot(12, 12)}{dot(21, 12)}</>,
  circle: ring(12, 12, 10, "#111", "none", 1.400),
  fillet: <>{p("M2 3H12Q21 4 21 22", "#a03a3a", "none", 1.400)}{p("M12 2H21V12", "#333", "none", 0.8)}</>,
  chamfer: <>{p("M2 3H11L21 13V22", "#a03a3a", "none", 1.400)}{p("M12 2H21V12", "#333", "none", 0.8)}</>,
  ellipse: <>{<ellipse cx={12} cy={12} rx={10} ry={7} fill="none" stroke="#111" strokeWidth={1.300} />}{dot(12, 12)}{p("M12 8V16M8 12H16", "#e01010")}</>,
  conic: <>{p("M6 3Q15 4 15 12Q15 19 6 21", "#111", "none", 1.400)}{dot(6, 3)}{dot(6, 21)}{dot(21, 12, 2, "#444")}</>,
  patCurve: <>{p("M1 22Q8 20 10 10Q12 2 22 1", "#8a3a3a", "none", 2)}{ring(13, 14, 3, "#222", "#777", 1.600)}{ring(20, 14, 3, "#222", "#777", 1.600)}{ring(13, 21, 3, "#222", "#777", 1.600)}{ring(20, 21, 3, "#222", "#777", 1.600)}</>,
  mirCurve: <>{p("M1 22Q8 20 10 10Q12 2 22 1", "#8a3a3a", "none", 2)}{p("M9 12L15 10V20L9 22ZM16 11L22 9V20L16 22Z", "#222", "#666")}</>,
  derive: p("M2 4H22M2 20H22M4 1V23M4 4L21 21", "#222"),
  plusFig: <>{p("M6 1V11M1 6H11", "#8a2a2a", "none", 2)}{ring(18, 8, 5, "#222")}{p("M2 14H13V22H2Z", "#222")}</>,
  planeCurve: <>{p("M4 2L19 5V22L4 18Z", "#333", "#666")}{p("M1 20Q8 8 23 8", "#222")}{dot(12, 12, 2, "#8a2a2a")}</>,
  planesX: <>{p("M9 2L17 5V22L9 19Z", "#333", "#666")}{p("M1 10L9 5L23 14L15 19Z", "#333", "#5f5f6a")}{p("M8 6Q14 9 17 16", "#8a2a2a")}</>,
  addCyl: <>{p("M5 1V11M0 6H10", "#8a2a2a", "none", 2)}{p("M6 9V20Q11 23 16 20V9Q11 7 6 9Z", "#223", "#556")}{p("M19 6Q24 12 19 20", "#223")}</>,
  chainLine: <>{p("M1 20L12 8M1 17H23M3 15Q12 10 22 23", "#3a3a4a")}{ring(17, 5, 4, "#7a7430", "none", 2)}{ring(17, 11, 4, "#7a7430", "none", 2)}</>,
  trimQ: <>{p("M4 2L15 23M1 17H14", "#222")}{p("M16 14L22 7", "#7a5430", "none", 4)}</>,
  extendQ: <>{p("M4 2L15 23M1 17H10L16 12", "#222")}{p("M15 14L22 4", "#7a7430", "none", 3)}</>,
  cornerQ: <>{p("M1 12H14M14 4V22M14 12L22 18M10 5L22 16", "#4a2a2a")}</>,
  dimAuto: <>{p("M2 9V21M22 9V21M2 15H22M5 12L2 15L5 18M19 12L22 15L19 18", "#7a1a1a", "none", 1.500)}{p("M17 1L9 9H13L7 19L18 7H14Z", "#333", "#8a8430", 0.900)}</>,
  dimCurve: <>{p("M2 22V12Q2 2 12 2H22M7 22V14Q8 7 15 7H21", "#4a2a2a")}<text x={12} y={20} fontSize={11} fontWeight={700} fill="#6a2a2a">Σ</text></>,
  dimPart: <>{tri(0, 11, "#1a5a2a")}{p("M9 10H16V14L22 16V21L14 23L9 20Z", "#223", "#556")}{p("M11 2H16V7", "#7a2a2a")}</>,
  parallel: <>{p("M2 16L9 9M6 17L13 10", "#4a1a4a", "none", 1.400)}{p("M16 12V21M11 21H22", "#4a1a4a", "none", 1.400)}</>,
  symmetric: <>{p("M6 3H2V21H22V3H17M12 1V23M9 4V16M15 4V16", "#223", "none", 1.400)}{p("M5 5L8 2M19 5L16 2", "#8a2a8a", "none", 2)}</>,
  conAuto: <>{tri(0, 12, "#1a5a2a")}{p("M10 12L19 2M14 13L23 3M17 14V23M11 23H23", "#223")}</>,
  conShow: <>{p("M14 2V21M2 21H22M10 10L14 18", "#223")}{p("M2 22L11 12", "#8a2a2a", "none", 3)}</>,
  conPen: <>{p("M5 12H22V21H5ZM15 2V12M20 2V12M15 4H20", "#223")}{p("M2 23L10 14", "#8a2a2a", "none", 3)}</>,
  conDel: <>{tri(0, 7, "#1a5a2a")}{p("M10 10L19 1M14 11L23 2M8 12L20 23M20 12L8 23", "#223", "none", 1.500)}</>,
  conRef: <>{p("M1 10H22M1 6V14M22 6V14M12 6V14", "#7a1a1a")}{p("M2 16H16V23H2Z", "#223", "#556")}{p("M11 2H22", "#8a5a20", "none", 2)}</>,
  conAlt: <>{p("M3 2V22M8 2V22M18 2V22M22 2V22", "#223")}{tri(10, 12, "#8a2a2a")}</>,
  conFlip: <>{p("M2 22V12H8V22H12V8H16V22H22V4H18", "#4a2a2a")}{p("M6 6Q10 -1 15 5", "#8a5a20", "none", 2)}</>,
  conInfer: <>{p("M2 20H21M10 10V21", "#111", "none", 1.400)}{p("M12 14H17V20", "#a020a0", "none", 1.400)}{p("M17 1L9 10H13L9 18L19 8H14Z", "#806000", "#ffe02c", 0.8)}</>,

  clock: <>{ring(12, 12, 10, "#666f7a", "#dce8f4", 2)}{p("M12 5V12H17", "#222", "none", 1.800)}</>,
  viewCube: <>{p("M12 2L20 6V16L12 21L4 16V6ZM4 6L12 11L20 6M12 11V21M12 2V11L4 16M12 11L20 16", "#0f8a5a", "#dff4ea", 1.300)}{p("M14 22L21 18", "#e02010", "none", 2)}</>,
  cameraRed: <>{p("M3 5L18 3V19L3 20Z", "#d01818", "#f6dada", 1.400)}{ring(11, 11, 4.500, "#22307a", "#9ab0e8")}{p("M15 12L22 14V21L15 19Z", "#222", "#555")}</>,
  folder: <>{p("M2 5H9L11 8H20V20H2Z", "#a87400", "#f0b838")}{p("M6 11H23L19 21H2Z", "#a87400", "#ffe08a")}</>,
  pyramid: <>{p("M11 4L23 15V20H1V18Z", "#333", "#ffe28a")}{p("M11 4L17 20H23V15Z", "#333", "#2a4ac0")}</>,
  check: p("M4 12L9 18L20 5", "#12b01c", "none", 4),

  gear: <>{ring(12, 12, 6, "#222", "none", 2)}{p("M12 3V7M12 17V21M3 12H7M17 12H21M6 6L8 8M16 16L18 18M18 6L16 8M8 16L6 18", "#222", "none", 2.200)}</>,
  asmTree: <>{box(1, 1, 8, 8, GOLD)}{box(5, 5, 8, 8, GOLD)}{box(13, 14, 9, 9, GOLD)}{p("M14 12H23M5 15V23M5 19H11", "#10207a", "none", 1.300)}</>,
  mirrorTab: <>{p("M3 3V12L11 8ZM21 3V12L13 8Z", "#1020c0", "#1030e0")}{p("M12 2V23", "#222", "none", 0.8)}{p("M1 15H9V23H1Z", "#8a7a00", "#fff04a")}{p("M14 14V23H23Z", "#8a0a0a", "#d02020")}</>,
  partTree: <>{p("M1 4V12Q6 15 11 12V4Q6 1 1 4Z", "#8a1a6a", "#e0a0d0")}{ring(18, 19, 4.500, "#8a1a6a")}{ring(18, 19, 1.600, "#8a1a6a")}{p("M14 10H23M6 16V24M6 20H12", "#10207a", "none", 1.300)}</>,
  books: <>{p("M1 7L6 2L8 3V19L4 23H1Z", "#a85a00", "#f5a04a", 0.8)}{p("M7 7L12 2L15 3V19L11 23H7Z", "#1a7a2a", "#4ad05a", 0.8)}{p("M14 7L19 2L23 3V19L18 23H14Z", "#1a4a9a", "#4a9af0", 0.8)}{p("M1 10H5M7 10H11M14 10H18", "#fff", "none", 1)}</>,
  wifi: <>{ring(8, 16, 7, "#0b4f90", "#1f86e0")}{glyph("i", 6, 21, 14, "#fff")}{p("M9 6Q17 6 18 15M9 1Q22 2 23 15", "#2a6ac8", "none", 2.400)}</>,
  webPage: <>{p("M3 2H15L21 8V22H3Z", "#2a5ac8", "#fff", 1.400)}{ring(12, 14, 5, "#1a6a9a", "#2b9be0")}{dot(11, 13, 2.200, "#48c048")}</>,
  rainbow: <>{["#f02020", "#ff9a10", "#fff020", "#30e030", "#20d0f0", "#2040f0"].map((c, i) => <rect key={c} x={1} y={1 + i * 3.700} width={8} height={3.700} fill={c} />)}{p("M11 5L22 20", "#111", "none", 3)}{dot(11, 5, 2.600, "#fff")}</>,
  drillWand: <>{p("M2 3H8V19H2Z", "#1a5ab0", "#5aa8f0")}{p("M10 8H23L12 14", "#2a6ac8", "none", 1.600)}{p("M1 20L10 22", "#ffb020", "none", 3)}{p("M11 6L22 20", "#111", "none", 2.600)}</>,
  robot: <>{p("M6 17L9 12L14 15L10 20Z", "#555", "#ccc")}{p("M9 12L13 4", "#777", "none", 3)}{p("M8 4L18 2Q22 3 22 8M13 4L17 9", "#444", "none", 2)}{dot(5, 20, 3.600, "#f28a20")}{p("M9 21H18", "#556", "none", 3)}</>,
};

const Icon = ({ name, className = "size-6" }: { name: string; className?: string }) => (
  <svg viewBox="0 0 24 24" className={`${className} shrink-0 overflow-visible`} aria-hidden="true">{icons[name]}</svg>
);

const Caret = () => <span className="border-x-[3px] border-t-4 border-x-transparent border-t-black" />;

function ToolItem({ token }: { token: string }) {
  if (token === "|") return <span className="h-full w-[6px] shrink-0 px-[2px]"><span className="block h-full border-l border-[#b4b4b4] bg-white" /></span>;
  if (token === "v") {
    return <button type="button" aria-label="More" className="flex h-7 w-3 shrink-0 items-center justify-center"><Caret /></button>;
  }
  const off = token.startsWith("~");
  const name = off ? token.slice(1) : token;
  return (
    <button type="button" aria-label={name} disabled={off} className={`flex h-7 w-[31px] shrink-0 items-center justify-center ${off ? "opacity-50" : ""}`}>
      <Icon name={name} />
    </button>
  );
}

const Tools = ({ list }: { list: string }) => <>{list.split(" ").map((t, i) => <ToolItem key={i} token={t} />)}</>;

const Grip = () => (
  <span className="flex w-2 shrink-0 justify-center self-stretch py-1">
    <span className="w-0 border-l-2 border-dotted border-[#999]" />
  </span>
);

const Overflow = ({ className = "", single = false }: { className?: string; single?: boolean }) => (
  <button type="button" aria-label="Toolbar options" className={`flex w-3 shrink-0 flex-col items-center justify-between self-stretch pt-1 pb-2 ${className}`}>
    <svg viewBox="0 0 8 6" className="h-[6px] w-2">{!single && p("M0.500 0.500L3 3L0.500 5.500M4.500 0.500L7 3L4.500 5.500", "#000", "none", 1.400)}</svg>
    <Caret />
  </button>
);

const Bar = ({ children }: { children: ReactNode }) => (
  <div className="flex h-[34px] items-center overflow-hidden border-t border-b border-t-white border-b-[#b9b9b9] bg-linear-to-b from-[#e2e2e2] to-[#d0d0d0]">{children}</div>
);

const Group = ({ children, last = false }: { children: ReactNode; last?: boolean }) => (
  <div className={`flex h-full items-center ${last ? "grow" : "border-r border-[#b0b0b0]"}`}>
    <Grip />
    {children}
  </div>
);

function Combo({ label, value, className }: { label: string; value: string; className: string }) {
  return (
    <div className={`relative h-[22px] shrink-0 ${className}`}>
      <select aria-label={label} className="size-full appearance-none rounded-[3px] border border-[#666] bg-white pl-px text-xs shadow-[inset_1px_1px_0_#999]">
        <option>{value}</option>
      </select>
      <span className="pointer-events-none absolute top-px right-px flex h-5 w-4 items-center justify-center rounded-r-[2px] border-l border-[#3a6aa8] bg-linear-to-b from-[#cfe6fb] via-[#6fb4ee] to-[#a8d4f8]">
        <span className="border-x-[5px] border-t-[6px] border-x-transparent border-t-black" />
      </span>
    </div>
  );
}

const menus: [string, string, string, string][] = [
  ["视图", "V", "", "mr-3.5"], ["插入", "S", "", "mr-3.5"], ["格式", "R", "", "mr-3.5"], ["工具", "T", "", "mr-3.5"],
  ["装配", "A", "", "mr-3.5"], ["优品软件", "", "", "mr-3.5"], ["产品制造信息", "M", "", "mr-3.5"], ["信息", "I", "", "mr-3.5"],
  ["分析", "L", "", "mr-[22px]"], ["首选项", "P", "", "mr-3.5"], ["窗口", "O", "", "mr-3.5"], ["GC工具箱", "", "", "mr-2.5"],
  ["重新生成工作视图", "G", "", "mr-2"], ["旋转", "R", "...", "mr-2.5"], ["帮助", "H", "", ""],
];

const MenuButton = ({ text, hotkey, tail, gap }: { text: string; hotkey: string; tail: string; gap: string }) => (
  <button type="button" className={`shrink-0 whitespace-nowrap ${gap}`}>
    {text}{hotkey && <>(<u className="underline-offset-2">{hotkey}</u>)</>}{tail}
  </button>
);

function TitleBar() {
  return (
    <header className="flex h-[27px] items-center border-t-[3px] border-[#4d4d54] bg-[#1c1c1c] pl-1 text-white">
      <Icon name="nx" className="size-4" />
      <h1 className="ml-[3px] text-xs whitespace-pre [text-spacing-trim:space-all]">机械一部（张雄）UG10.0 心态的好坏  决定成败！！！ - 建模 - [鬼工方3.prt （修改的） ]</h1>
      <span className="mr-6 ml-auto font-['Open_Sans','Noto_Sans',sans-serif] text-[13px] font-extrabold">SIEMENS</span>
      <div className="flex gap-1 pr-px">
        <button type="button" aria-label="Minimize" className="flex h-5 w-[18px] items-end justify-center rounded-[3px] border border-[#666] bg-linear-to-b from-[#777] to-[#222] pb-1">
          <span className="h-[2px] w-2 bg-white" />
        </button>
        <button type="button" aria-label="Restore" className="flex h-5 w-[18px] items-center justify-center rounded-[3px] border border-[#666] bg-linear-to-b from-[#777] to-[#222]">
          <svg viewBox="0 0 12 12" className="size-3">{p("M4 4V1H11V7H8M1 5H8V11H1Z", "#fff", "none", 1.500)}</svg>
        </button>
        <button type="button" aria-label="Close" className="flex h-5 w-[18px] items-center justify-center rounded-[3px] border border-[#c0604a] bg-linear-to-b from-[#f09a80] to-[#e03c20]">
          <svg viewBox="0 0 12 12" className="size-3">{p("M1 1L11 11M11 1L1 11", "#fff", "none", 2.200)}</svg>
        </button>
      </div>
    </header>
  );
}

function MenuBar() {
  const small = "flex h-4 w-4 items-center justify-center rounded-[3px] border border-[#777] bg-[#ececec]";
  return (
    <nav className="flex h-7 items-center border-b border-[#b9b9b9] bg-[#e4e4e4] pr-[5px] text-xs">
      <Grip />
      <Icon name="part" className="mr-2 size-[14px]" />
      <MenuButton text="文件" hotkey="F" tail="" gap="mr-3.5" />
      <MenuButton text="编辑" hotkey="E" tail="" gap="mr-[9px]" />
      <span className="mr-[9px] h-5 border-l border-[#b0b0b0]" />
      {menus.map(([text, hotkey, tail, gap]) => <MenuButton key={text} text={text} hotkey={hotkey} tail={tail} gap={gap} />)}
      <div className="ml-auto flex gap-[3px]">
        <button type="button" aria-label="Minimize document" className={small}><span className="mt-1 h-[2px] w-2 bg-[#555]" /></button>
        <button type="button" aria-label="Restore document" className={small}>
          <svg viewBox="0 0 12 12" className="size-[10px]">{p("M4 4V1H11V7H8M1 5H8V11H1Z", "#555", "none", 1.600)}</svg>
        </button>
        <button type="button" aria-label="Close document" className={small}>
          <svg viewBox="0 0 12 12" className="size-[10px]">{p("M1 1L11 11M11 1L1 11", "#555", "none", 2.800)}</svg>
        </button>
      </div>
    </nav>
  );
}

function TopToolbars() {
  return (
    <>
      <Bar>
        <Group>
          <ToolItem token="nx" />
          <button type="button" className="text-xs">启动</button>
          <Tools list="v new open save print | cut copy paste del | undo v redo | cube v | diaUpdate boxLink equals diaList | infoDia infoGray | search" />
          <Overflow className="mr-[2px] ml-5" />
        </Group>
        <Group last>
          <Combo label="工作图层" value="1" className="mx-1 w-[52px]" />
          <Tools list="layerList layerMove layerCopy csysRed csysMove csysZero csysSave csysPen | playA v playA diaPick diaRed diaGreen diaBoth | grid gridSnap planeBox planeGray | measure" />
          <Overflow className="mr-[2px] ml-auto" />
        </Group>
      </Bar>
      <Bar>
        <Group>
          <Tools list="fit v rotate perspective drawGray section v cube v clipOrange clipGreen v frame v gridStar v" />
          <Overflow className="mr-[2px] ml-6" />
        </Group>
        <Group>
          <Tools list="surfRed planeDots netDots netRed pour slab slabLines slabGrid netGreen bracketIn trap loopGrid gridPatch gridOrange gridU trimRed trimBlue tube project" />
          <Overflow className="mr-[2px] ml-5" />
        </Group>
        <Group>
          <Tools list="nodes layers layerList | tag | checkPart checkPen checkBox | abc v" />
        </Group>
        <Group last>
          <Tools list="lockA lockA" />
          <Overflow single className="mr-[2px] ml-auto" />
        </Group>
      </Bar>
      <Bar>
        <Group>
          <Tools list="doc" />
          <Overflow />
        </Group>
        <Group last>
          <Tools list="sketch plane v extrude revolve cube cylinder cone sphere hole boss pocket pad emboss fan slot groove dart thread | pattern v patternFace pattern patternMany mirror mirrorBlue bodyDash combine v split trimBody sheetRed boxDash skin boxMove delFace slabCut bend thick wrapFace offset | edgeBlend faceBlend softBlend bridge" />
          <Overflow className="mr-[2px] ml-auto" />
        </Group>
      </Bar>
      <Bar>
        <div className="flex h-full grow items-center pl-[5px]">
          <Combo label="类型过滤器" value="没有选择过滤器" className="mr-2 w-[148px]" />
          <Combo label="选择范围" value="整个装配" className="mr-[3px] w-[154px]" />
          <Tools list="~selLink | ~backFilter filter v palette" />
          <Combo label="颜色过滤器" value="全部" className="mx-[2px] w-[60px]" />
          <Tools list="~spin ~chainTree | ~marquee v | sheetCube wireCube | ~snapAll ~snapPt ~lineDot ~lineMid ~sCurve ~polyDots ~arcCross ~circleDot ~circleQuad ~plusDot ~linePt ~facePt | ~gridPlane | csysXYZ bigA" />
          <Overflow single className="mr-[2px] ml-auto" />
        </div>
      </Bar>
    </>
  );
}

const tabs: [string, string][] = [
  ["asmTree", "mt-3"], ["mirrorTab", "mt-px"], ["partTree", "mt-px"], ["books", "mt-px"], ["wifi", "mt-[13px]"],
  ["webPage", "mt-[13px]"], ["clock", "mt-[13px]"], ["rainbow", "mt-px"], ["drillWand", "mt-px"], ["robot", "mt-px"],
];

function ResourceBar() {
  return (
    <div className="flex w-[31px] shrink-0 flex-col items-end border-r border-[#777] bg-[#ababab]">
      <button type="button" aria-label="gear" className="mr-[6px] flex h-8 items-center"><Icon name="gear" className="size-5" /></button>
      {tabs.map(([name, gap]) => (
        <button
          key={name}
          type="button"
          aria-label={name}
          className={`flex h-[41px] items-center justify-center rounded-l border border-r-0 border-[#666] ${gap} ${name === "partTree" ? "w-7 bg-[#ececec]" : "w-[26px] bg-linear-to-b from-[#dcdcdc] to-[#c2c2c2]"}`}
        >
          <Icon name={name} className="size-[22px]" />
        </button>
      ))}
      <span className="mt-px h-2 w-[26px] rounded-tl border-t border-l border-[#666] bg-[#ccc]" />
      <div className="mt-auto mr-[7px] mb-px flex flex-col gap-px">
        {["M1 2H9M5 4L9 8H1Z", "M5 2L9 7H1Z", "M1 3H9L5 8Z", "M1 2H9L5 6ZM1 8H9"].map((d, i) => (
          <button key={d} type="button" aria-label="Scroll tabs" className="flex size-[15px] items-center justify-center border border-[#888] bg-[#dcdcdc]">
            <svg viewBox="0 0 10 10" className="size-[10px]">{i < 2 ? p(d, "#aaa", "#aaa", 1) : p(d, "#333", "#333", 1)}</svg>
          </button>
        ))}
      </div>
    </div>
  );
}

const Toggle = ({ open }: { open?: boolean }) => (
  <span className="mr-1 flex size-[9px] items-center justify-center rounded-[2px] border border-[#888] bg-white">
    <svg viewBox="0 0 7 7" className="size-[7px]">{p(open ? "M1 3.500H6" : "M1 3.500H6M3.500 1V6", "#222", "none", 1)}</svg>
  </span>
);

const Branch = ({ className }: { className: string }) => <span className={`border-t border-dotted border-[#999] ${className}`} />;

function Navigator() {
  const row = "flex h-5 items-center border-b border-[#e3e3e3] even:bg-[#f6f6f6] text-[#333]";
  return (
    <aside className="flex w-[180px] shrink-0 flex-col border-r border-[#888] bg-[#ebebeb] pr-[9px] pb-[5px] pl-[7px] text-xs">
      <div className="flex h-[30px] items-center justify-between px-1">
        <h2 className="font-bold">部件导航器</h2>
        <button type="button" aria-label="Undock" className="h-3 w-[13px] border border-t-2 border-black bg-white" />
      </div>
      <div className="flex grow flex-col border border-[#777] bg-white p-px">
        <div className="flex h-5 items-center border-b border-[#888] bg-linear-to-b from-[#f4f4f4] to-[#cfcfcf] pl-[6px]">
          名称<span className="ml-4 border-x-[6px] border-b-[6px] border-x-transparent border-b-black" />
        </div>
        <ul className="grow">
          <li className={row}><Branch className="ml-[10px] w-2" /><Icon name="clock" className="mr-1 size-4" />历史记录模式</li>
          <li className={`${row} pl-1`}><Toggle /><Icon name="viewCube" className="mr-1 ml-px size-4" />模型视图</li>
          <li className={`${row} pl-1`}><Toggle /><Icon name="check" className="ml-[3px] size-[14px]" /><Icon name="cameraRed" className="mx-[2px] size-4" />摄像机</li>
          <li className={`${row} pl-1`}><Toggle open /><Icon name="folder" className="mr-1 ml-px size-4" />模型历史记录</li>
          <li className={row}>
            <Branch className="mr-[2px] ml-7 w-[9px]" />
            <label className="flex items-center gap-[2px] font-bold">
              <span className="relative flex size-3">
                <input type="checkbox" defaultChecked className="size-3 appearance-none border border-black bg-white" />
                <Icon name="check" className="pointer-events-none absolute size-3" />
              </span>
              <Icon name="pyramid" className="mr-[2px] size-4" />
              <span className="text-[13px]">solid (0)</span>
            </label>
          </li>
          {Array.from({ length: 15 }, (_, i) => <li key={i} className={row} />)}
        </ul>
        <div className="flex h-4 items-center justify-between bg-[#ececec] px-[6px]">
          <span className="border-y-[3px] border-r-4 border-y-transparent border-r-black" />
          <span className="mr-auto ml-2 flex h-[15px] w-12 items-center justify-center gap-[2px] rounded-[2px] border border-[#888] bg-linear-to-b from-[#f4f4f4] to-[#c9c9c9]">
            <i className="h-[6px] w-px bg-[#555]" /><i className="h-[6px] w-px bg-[#555]" /><i className="h-[6px] w-px bg-[#555]" />
          </span>
          <span className="border-y-[3px] border-l-4 border-y-transparent border-l-black" />
        </div>
      </div>
      <div className="flex h-[11px] shrink-0 items-center gap-1">
        <span className="grow border-t border-[#aaa]" /><span className="h-[6px] w-7 border border-white border-r-[#888] border-b-[#888] bg-[#d4d4d4]" /><span className="grow border-t border-[#aaa]" />
      </div>
      {["相依性", "细节", "预览"].map((name) => (
        <button key={name} type="button" className="flex h-[23px] shrink-0 items-center border-b border-[#999] bg-linear-to-b from-[#f0f0f0] to-[#cdcdcd] pl-[6px] text-[#10104a]">
          {name}
          <span className="ml-auto flex h-full w-[22px] items-center justify-center border-l border-[#999]">
            <svg viewBox="0 0 12 12" className="size-3">{p("M1 1L6 10L11 1", "#555", "none", 2.600)}</svg>
          </span>
        </button>
      ))}
    </aside>
  );
}

function SideItem({ token }: { token: string }) {
  if (token === "|") return <span className="my-[2px] h-[2px] shrink-0 self-stretch border-t border-[#b0b0b0] bg-white" />;
  const more = token.endsWith("+");
  const on = token.endsWith("*");
  const off = token.startsWith("~");
  const name = token.replace(/[~+*]/g, "");
  return (
    <div className="flex h-[31px] shrink-0 items-center">
      <button type="button" aria-label={name} disabled={off} aria-pressed={on} className={`flex h-[30px] w-[30px] items-center justify-center ${on ? "rounded-[3px] border border-[#666] bg-white" : ""} ${off ? "opacity-50" : ""}`}>
        <Icon name={name} />
      </button>
      {more && <ToolItem token="v" />}
    </div>
  );
}

const SideFooter = () => (
  <button type="button" aria-label="Toolbar options" className="mt-auto flex h-4 w-full items-center justify-between px-[7px]">
    <span className="border-y-[3px] border-r-4 border-y-transparent border-r-black" />
    <svg viewBox="0 0 6 8" className="h-2 w-[6px]">{p("M0 1L3 3.500L6 1M0 4.500L3 7L6 4.500", "#111", "none", 1.400)}</svg>
  </button>
);

const SideBar = ({ list, className }: { list: string; className: string }) => (
  <div className={`flex flex-col items-center border-l border-l-white bg-linear-to-r from-[#dedede] to-[#cdcdcd] ${className}`}>
    <span className="mx-auto mt-[3px] mb-px h-[3px] w-[70%] shrink-0 border-t-2 border-dotted border-[#999]" />
    {list.split(" ").map((t, i) => <SideItem key={i} token={t} />)}
    <SideFooter />
  </div>
);

/* Nested cube: every face has a round bore, and each bore shows the next cube inside. */
function Model() {
  const edge = { stroke: "#3a3420", strokeWidth: 1 };
  const rim = (m: string) => (
    <circle r={1} transform={m} fill="none" stroke="#3a3420" strokeWidth={1} vectorEffect="non-scaling-stroke" />
  );
  const wall = (i: number) => <rect x={528} y={380} width={480} height={330} fill={`url(#wall${i})`} />;
  const L = ["matrix(111 45 0 135 652 545.5)", "matrix(69 28 0 84 691 526)", "matrix(29 12 0 35 721 512)"];
  const R = ["matrix(102 -49.7 0 135 891 540.5)", "matrix(63 -31 0 84 849 523.5)", "matrix(26 -13 0 35 817 510.5)"];
  return (
    <svg viewBox="258 192 1067 577" className="size-full" role="img" aria-label="solid">
      <defs>
        <linearGradient id="space" gradientUnits="userSpaceOnUse" x1="0" y1="192" x2="0" y2="640">
          <stop offset="0" stopColor="#000040" /><stop offset="0.650" stopColor="#00000e" /><stop offset="1" stopColor="#000" />
        </linearGradient>
        <linearGradient id="bowl" gradientUnits="userSpaceOnUse" x1="616" y1="0" x2="917" y2="0">
          <stop offset="0" stopColor="#f08c00" /><stop offset="0.15" stopColor="#fb9600" /><stop offset="0.5" stopColor="#ee8e00" /><stop offset="0.72" stopColor="#d07e00" /><stop offset="1" stopColor="#dc8500" />
        </linearGradient>
        <linearGradient id="shade" x1="0" y1="0" x2="1" y2="1"><stop offset="0" stopColor="#6e4200" /><stop offset="1" stopColor="#b87000" /></linearGradient>
        {[[403, 688], [438, 614], [475, 549]].map(([a, b], i) => (
          <linearGradient key={a} id={`wall${i}`} gradientUnits="userSpaceOnUse" x1="0" y1={a} x2="0" y2={b}>
            <stop offset="0" stopColor="#7a4a00" /><stop offset="0.15" stopColor="#a86400" /><stop offset="0.36" stopColor="#f89400" />
            <stop offset="0.5" stopColor="#ffc400" /><stop offset="0.64" stopColor="#fff010" /><stop offset="0.92" stopColor="#ffff00" /><stop offset="1" stopColor="#f5c000" />
          </linearGradient>
        ))}
        <clipPath id="t0"><ellipse cx="766.5" cy="338" rx="150.500" ry="67" /></clipPath>
        <clipPath id="t1"><ellipse cx="766.5" cy="390" rx="93" ry="42" /></clipPath>
        {L.map((m, i) => <clipPath key={m} id={`l${i}`}><circle r={1} transform={m} /></clipPath>)}
        {R.map((m, i) => <clipPath key={m} id={`r${i}`}><circle r={1} transform={m} /></clipPath>)}
      </defs>

      <g {...edge} strokeLinejoin="round">
        <path d="M756 232L1005 333L777 444L528 343Z" fill="#fff200" />
        <path d="M528 343L777 444V747L528 646Z" fill="#d68100" />
        <path d="M777 444L1005 333L1006 636L777 747Z" fill="#fb9600" />
      </g>

      <g clipPath="url(#t0)">
        <rect x="600" y="260" width="330" height="150" fill="url(#bowl)" />
        <path d="M621 356C630 322 655 303 685 303C696 303 704 304 712 307C722 314 728 323 732 333L643 377L640 410L600 380Z" fill="url(#space)" />
        <path d="M911 356C905 325 880 300 840 300C826 300 815 302 805 305C795 312 789 322 785 330L893 374L900 410L930 380Z" fill="url(#space)" />
        <path d="M712 307L752 323L732 333C728 323 722 314 712 307ZM805 305L768 323L785 330C789 322 795 312 805 305Z" fill="url(#shade)" />
        <path d="M712 307Q732 312 752 323H768Q786 312 805 305" fill="none" {...edge} />
        <path d="M752 323H768L893 374L860 430H680L643 377Z" fill="#fff200" {...edge} />
        <g clipPath="url(#t1)">
          <rect x="670" y="340" width="200" height="80" fill="url(#bowl)" />
          <path d="M682 395C690 380 705 374 717 374Q726 374 731 377Q739 385 742 396L728 405H670Z" fill="url(#space)" />
          <path d="M850 395C842 378 825 372 812 372Q800 372 791 377Q783 384 779 394L803 405H870Z" fill="url(#space)" />
          <path d="M731 377L760 388L742 396Q739 385 731 377ZM791 377L767 388L779 394Q783 384 791 377Z" fill="url(#shade)" />
          <path d="M760 388H767L810 408H722Z" fill="#fff200" {...edge} />
        </g>
        <ellipse cx="766.5" cy="390" rx="93" ry="42" fill="none" {...edge} />
      </g>
      <ellipse cx="766.5" cy="338" rx="150.500" ry="67" fill="none" {...edge} />

      <g clipPath="url(#l0)">
        {wall(0)}
        <path d="M609 404C575 425 553 460 554 492C558 532 590 570 609 584L617 597C618 640 650 680 693 680C710 680 722 678 731 673L800 660V400Z" fill="url(#space)" />
        <path d="M617 597L640 607Q628 614 622 624Q617 610 617 597Z" fill="#f08c00" />
        <path d="M609 390V584L617 597L749 650L800 600V390Z" fill="#d68100" {...edge} />
        <g clipPath="url(#l1)">
          {wall(1)}
          <path d="M671 438C650 445 635 470 635 492C637 515 655 538 666 546L674 554C675 585 700 607 720 607Q730 608 740 605L780 590V430Z" fill="url(#space)" />
          <path d="M674 554L730 577Q705 579 684 586Q675 570 674 554Z" fill="#f08c00" />
          <path d="M679 576Q686 568 696 563" fill="none" {...edge} />
          <path d="M671 430V550L674 554L753 586L780 570V430Z" fill="#d68100" {...edge} />
          <g clipPath="url(#l2)">
            {wall(2)}
            <path d="M722 472C713 480 710 492 714 501L730 515L760 510V470Z" fill="#00000e" />
            <path d="M726 478L714 502L729 516L750 510V490L732 483Z" fill="#ffee10" {...edge} />
            <path d="M733 485Q728 500 716 504" fill="none" {...edge} />
            <path d="M728 516L745 510Q752 522 748 538Q732 536 728 516Z" fill="#f08c00" {...edge} />
          </g>
          {rim(L[2])}
        </g>
        {rim(L[1])}
      </g>
      {rim(L[0])}

      <g clipPath="url(#r0)">
        {wall(0)}
        <path d="M924 397C965 415 981 450 980 492C975 530 945 565 925 577L917 590C918 640 885 676 850 677Q835 677 823 673L780 660V400Z" fill="url(#space)" />
        <path d="M917 590L891 603Q905 612 912 625Q918 608 917 590Z" fill="#c87800" />
        <path d="M924 390V577L917 590L801 646L770 600V390Z" fill="#fb9600" {...edge} />
        <g clipPath="url(#r1)">
          {wall(1)}
          <path d="M866 434C886 445 899 470 898 494C896 518 878 540 864 547L860 551C860 585 840 606 818 606L806 605L780 590V430Z" fill="url(#space)" />
          <path d="M860 551L805 577Q832 579 852 586Q860 570 860 551Z" fill="#cf7d00" />
          <path d="M855 577Q846 567 836 562" fill="none" {...edge} />
          <path d="M862 430V549L860 551L790 583L770 570V430Z" fill="#fb9600" {...edge} />
          <g clipPath="url(#r2)">
            {wall(2)}
            <path d="M820 474Q825 495 814 507L805 515H780V470Z" fill="#00000e" />
            <path d="M809 501L816 504L806 514L805 540H790V510Z" fill="#ffee10" {...edge} />
            <path d="M804 512Q808 528 799 536L790 530Z" fill="#d68100" {...edge} />
          </g>
          {rim(R[2])}
        </g>
        {rim(R[1])}
      </g>
      {rim(R[0])}
      <path d="M777 444V747" {...edge} />

      {/* view triad */}
      <g>
        <path d="M292 692L306 685L320 692V709L306 717L292 709Z" fill="#8f8f8f" stroke="#bbb" strokeWidth="0.8" />
        <path d="M306 685V717M292 692L306 700L320 692" stroke="#c4c4c4" strokeWidth="0.8" fill="none" />
        <path d="M306 716L286 709" stroke="#d04040" strokeWidth="2" /><path d="M281 707L290 707L287 712Z" fill="#d04040" />
        <path d="M306 716L326 708" stroke="#1f4fe0" strokeWidth="2" /><path d="M331 705L322 707L325 712Z" fill="#1f4fe0" />
        <path d="M306 716V692" stroke="#1f8a2c" strokeWidth="2" /><path d="M306 687L309 696H303Z" fill="#1f8a2c" />
        <circle cx="306" cy="716.500" r="4.500" fill="#d8d8d8" />
        <g fontSize="11"><text x="274" y="710" fill="#e03030">X</text><text x="303" y="687" fill="#28a038">Y</text><text x="329" y="709" fill="#2a5af0">Z</text></g>
      </g>
    </svg>
  );
}

function Workspace() {
  return (
    <main className="flex grow border-t border-[#888]">
      <ResourceBar />
      <Navigator />
      <div className="flex w-[46px] shrink-0 flex-col bg-[#d4d4d4]">
        <SideBar list="orientMove orientUp orientCopy cylTri orientSwap" className="h-[184px] shrink-0 border-b border-b-[#aaa]" />
        <SideBar list="chrome ~ballRed+ ~ballCut+ ~screenNo+ ~screen+ lampCube* ~personOff ~floor ~personOff+ ~ballGrid+ ~boxNo+ chromeKey" className="grow" />
      </div>
      <section className="min-w-0 grow border-x border-b border-[#f0a048] bg-linear-to-b from-[#000040] via-[#00000e] via-50% to-black to-80%">
        <Model />
      </section>
      <div className="flex shrink-0">
        <SideBar list="film camera brush balls gearBox lamp lampCube* person sceneBall sceneColor ~monitor+ ~solids scene flagKey ~boxShot ~boxView | ~boxMarquee" className="w-[46px] border-r border-r-[#aaa]" />
        <SideBar list="line arc circleLine rect hex stripSurf wave curveSurf spline proj1 proj2 proj3 loop pipeCross uvNet dropSurf crossSurf" className="w-[34px] border-r border-r-[#aaa]" />
        <div className="relative flex w-[34px]">
          <SideBar list="chain* | cLine cAxes cTan cPerp cLineArc cTwoArc plus plusMany | cArc cArcTan cArcBox cArcRad | cCirc cCircTan cCircBox cCircRad" className="w-full overflow-hidden" />
          <div className="absolute top-[94px] left-[13px] h-[46px] w-[21px] overflow-hidden">
            <span className="flex size-[46px] items-center rounded-full border-2 border-[#d0d0d0] bg-linear-to-b from-[#5fd080] to-[#27a04a] pl-[2px] text-xs font-bold text-white">52</span>
          </div>
        </div>
      </div>
    </main>
  );
}

function BottomToolbars() {
  return (
    <>
      <div className="flex h-[34px] bg-[#e2e2e2]">
        <div className="flex h-full items-center border-r border-[#b0b0b0] pr-[2px]">
          <Grip />
          <Tools list="dimCube dimCube2 v angleDim v bowPart v cubeNote v slabPen v boxCut v textStyle v textFind textMove" />
          <Overflow single />
        </div>
      </div>
      <Bar>
        <Group last>
          <Tools list="sketchNew" />
          <button type="button" disabled className="flex shrink-0 items-center gap-1 px-[3px] text-xs text-[#999]">
            <Icon name="flagGray" />完成草图
          </button>
          <Tools list="profile v profile line arc circle ~fillet ~chamfer rect hex spline ellipse conic plus ~loop v ~loop ~patCurve ~mirCurve ~derive ~plusFig ~planeCurve ~planesX ~addCyl | ~chainLine v ~trimQ ~extendQ ~cornerQ | ~dimAuto v ~dimCurve ~dimPart | ~parallel ~symmetric ~conAuto v ~conShow ~conPen ~conDel ~conRef ~conAlt ~conFlip conInfer" />
          <Overflow className="mr-[2px] ml-auto" />
        </Group>
      </Bar>
      <div className="flex h-[22px] items-center bg-[#dadada] text-xs font-bold">
        <p className="w-[46%] pl-[3px]">水平拖动光标以绕 Y 轴旋转视图</p>
        <p className="flex h-full grow items-center border-l border-[#999] pl-[3px]">边 / solid(1)</p>
        <div className="flex h-full items-center gap-1 border-x border-[#bbb] pr-9 pl-[22px]">
          <Icon name="flagGray" className="size-4" />
          <svg viewBox="0 0 16 16" className="size-4">{p("M1 4V1H4M12 1H15V4M15 12V15H12M4 15H1V12", "#fff", "none", 2)}{p("M4 4H12V12H4Z", "#222", "#5aa8f0", 1.500)}</svg>
        </div>
        <span className="w-4" />
      </div>
    </>
  );
}

const DotPad = () => <span className="h-[30px] w-2 bg-[radial-gradient(#1c0c30_1px,transparent_1px)] bg-size-[3px_4px]" />;

function Taskbar() {
  const app = "flex h-[38px] w-[58px] items-center justify-center rounded-[2px] border border-[#c0a8dc]";
  return (
    <footer className="flex h-10 items-center border-t border-[#2a1640] bg-[linear-gradient(65deg,#4a2470_0%,#5a2f86_12%,#5a2f86_32%,#6a3f90_33%,#66398e_44%,#5a2e84_46%,#693e90_52%,#5c3088_58%,#663b8e_63%,#4a2470_74%,#42205f_100%)] text-xs text-white shadow-[inset_0_1px_0_#9a80b8]">
      <button type="button" aria-label="Start" className="ml-2 flex size-[38px] items-center justify-center rounded-full border border-[#8ab0c8] bg-radial-[at_50%_90%] from-[#38d0f8] via-[#1a6090] to-[#2a4a6a]">
        <svg viewBox="0 0 24 24" className="size-7" aria-hidden="true">
          <path d="M3 5Q7 2 11 5L10 11Q6 9 2 11Z" fill="#e8582c" /><path d="M13 5Q17 8 22 5L20 12Q16 14 12 11Z" fill="#8ac83c" />
          <path d="M2 13Q6 11 10 13L9 19Q5 17 1 19Z" fill="#3f9ae8" /><path d="M12 13Q16 16 20 14L18 20Q14 22 10 19Z" fill="#f8c82c" />
        </svg>
      </button>
      <span className="mr-[22px] ml-3 flex"><DotPad /></span>
      <button type="button" aria-label="K" className="mr-[17px] flex size-8 items-center justify-center rounded-md bg-[#1e86ff]">
        <span className="flex size-[26px] items-center justify-center rounded-full border-2 border-white text-base font-extrabold italic">K</span>
      </button>
      <div className="flex gap-1">
        <button type="button" aria-label="Music" className={`${app} bg-linear-to-b from-[#a080c0] to-[#5a3086]`}>
          <span className="flex size-8 items-center justify-center rounded-md bg-[#ec1c0c]">
            <svg viewBox="0 0 24 24" className="size-6" strokeLinecap="round">{p("M17 3Q12 1 12 6L14 14Q14 17 11.500 17Q9 16.500 9 13.500Q10 9 15 9Q21 10 20.500 15Q19 22 12 22Q4 21 4 14Q4 9 8 7", "#fff", "none", 2.300)}</svg>
          </span>
        </button>
        <button type="button" aria-label="NX" className={`${app} bg-linear-to-b from-[#e0d4ec] to-[#b09ac8]`}><Icon name="nx" className="size-8" /></button>
        <button type="button" aria-label="W" className={`${app} bg-linear-to-b from-[#a080c0] to-[#5a3086]`}>
          <span className="flex size-8 items-center justify-center rounded-md bg-[#3aa4f8]">
            <svg viewBox="0 0 24 24" className="size-6">{p("M4 6V18L12 11L20 18V6", "#fff", "none", 2.200)}</svg>
          </span>
        </button>
      </div>
      <div className="ml-auto flex items-center">
        <DotPad />
        <svg viewBox="0 0 16 16" className="ml-[9px] size-4">{p("M1 8H15V14H1Z", "#ddd", "#999", 1)}{p("M3 10H13M3 12H13", "#fff", "none", 1)}{p("M8 8Q8 4 14 3", "#ccc", "none", 1)}</svg>
        <span className="ml-[7px] flex size-4 items-center justify-center rounded-full border border-[#9ab0f0] bg-[#1530c0] font-bold">?</span>
        <svg viewBox="0 0 10 18" className="mr-4 ml-[10px] h-[18px] w-[10px]">{p("M3 3V1H9V5H7M1 3H7V7H1Z", "#fff", "none", 1)}<path d="M2 13H8L5 16Z" fill="#fff" /></svg>
        <div className="flex items-center gap-2">
          <svg viewBox="0 0 16 16" className="size-4">{p("M4 1H12V5H4Z", "#eee", "#888")}{p("M3 5H13V15H3Z", "#eee", "#2a9a2a")}{p("M8 7V13M6 9V11H10V9", "#fff", "none", 1)}</svg>
          <span />
          <svg viewBox="0 0 16 16" className="size-4"><rect width="16" height="16" rx="3" fill="#3f86f0" />{p("M3 5L8 3L13 5L8 7ZM3 7L7 9V13L3 11ZM13 7L9 9V13L13 11Z", "#fff", "#fff", 0.5)}</svg>
          <svg viewBox="0 0 16 16" className="size-4">{ring(8, 8, 7.500, "#1a8a2a", "#f0d020", 1)}{dot(8, 8, 5, "#1a8a2a")}{p("M8 4V12M4 8H12", "#fff04a", "none", 2.400)}</svg>
          <svg viewBox="0 0 16 16" className="size-4">{p("M8 1L15 3V9Q13 14 8 15.500Q3 14 1 9V3Z", "#fff", "#4ab038", 1.500)}{p("M9 4L5 9H11L7 13", "#fff", "none", 1.400)}</svg>
          <svg viewBox="0 0 16 16" className="size-4"><rect width="16" height="16" rx="3" fill="#e8301c" />{ring(8, 9, 4, "#fff", "none", 1.500)}{p("M8 2L9 10", "#fff", "none", 1.500)}</svg>
          <svg viewBox="0 0 16 16" className="size-4">{p("M1 1H7V8H1Z", "#ccc", "#777")}{dot(10, 10, 5.500, "#2a9a2a")}{p("M7 10L10 13L13 7", "#fff", "none", 1.600)}</svg>
          <svg viewBox="0 0 16 16" className="size-4">{p("M5 4H15V12H5ZM8 15H13M2 1V6M1 3H4V7H1ZM2 7V13H5", "#fff", "#223", 1.300)}</svg>
          <svg viewBox="0 0 16 16" className="size-4"><rect width="16" height="16" rx="2" fill="#3a9ae8" />{p("M3 3H7M3 3V8M3 5H6M9 3L13 8M13 3L9 8M3 11H13M3 13H12", "#fff", "none", 1.300)}</svg>
          <svg viewBox="0 0 16 16" className="size-4">{p("M1 6H4L8 2V14L4 10H1Z", "#fff", "#ddd", 1)}{p("M10 5Q12 8 10 11M12 3Q15 8 12 13", "#fff", "none", 1.200)}</svg>
        </div>
        <div className="mr-[5px] ml-3 text-center leading-[18px]">
          <div>21:02</div>
          <div>2017/12/15 星期五</div>
        </div>
        <button type="button" aria-label="Show desktop" className="h-[38px] w-[14px] border border-[#8a70a8] bg-linear-to-b from-[#8a70a8] to-[#4a2870]" />
      </div>
    </footer>
  );
}

function Watermark() {
  return (
    <div className="pointer-events-none absolute right-6 bottom-[14px] flex items-end gap-2 opacity-60">
      <svg viewBox="0 0 72 82" className="h-[82px] w-[72px]" aria-hidden="true">
        <path d="M36 0L72 20V60L36 82L0 60V20Z" fill="#7cc4ec" />
        <path d="M0 60L16 50L36 60L64 46L72 60L36 82Z" fill="#2a78c8" />
        <path d="M36 17L53 27V48L36 59L19 48V27Z" fill="#3fa4e0" stroke="#e4f2fc" strokeWidth="2" />
        <path d="M19 27L36 37L53 27M36 37V59" stroke="#e4f2fc" strokeWidth="2" fill="none" />
        <path d="M0 22Q20 4 50 12M70 22Q68 45 52 50M4 58Q2 36 18 26" stroke="#b9def5" strokeWidth="2" fill="none" />
      </svg>
      <div className="text-white">
        <div className="text-[41px] leading-[46px] font-bold">3D世界网</div>
        <div className="font-['DejaVu_Sans'] text-[19px] leading-5">WWW.3DSJW.COM</div>
      </div>
    </div>
  );
}

export default function App() {
  return (
    <div className="relative flex min-h-screen flex-col overflow-hidden bg-[#d8d8d8] font-['Noto_Sans','Noto_Sans_CJK_SC',sans-serif] text-black">
      <TitleBar />
      <MenuBar />
      <TopToolbars />
      <Workspace />
      <BottomToolbars />
      <Taskbar />
      <Watermark />
    </div>
  );
}
